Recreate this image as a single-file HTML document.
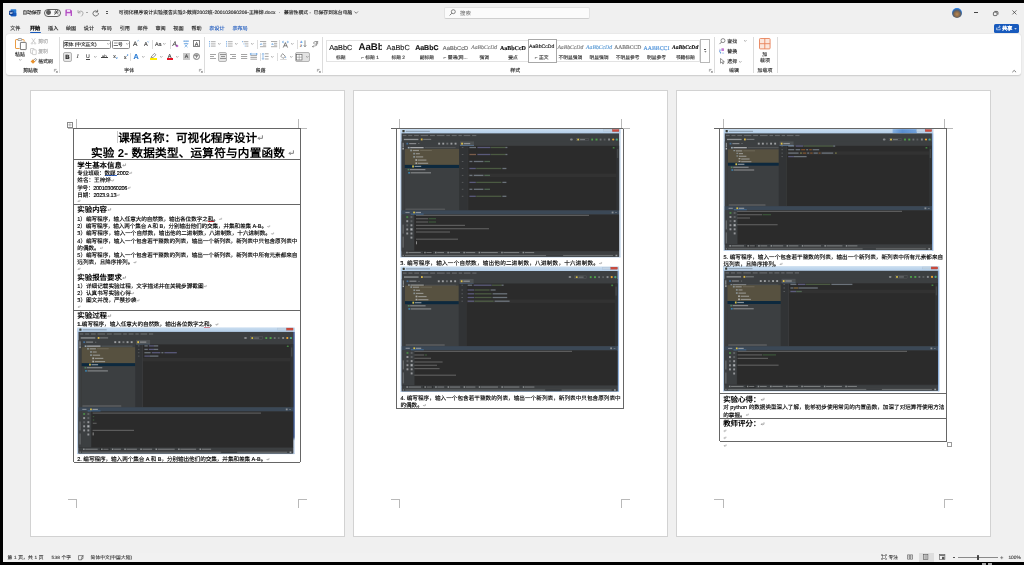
<!DOCTYPE html>
<html lang="zh-CN"><head><meta charset="utf-8"><title>Word</title><style>
html,body{margin:0;padding:0;background:#000;}
body{width:1024px;height:565px;overflow:hidden;position:relative;font-family:"Liberation Sans",sans-serif;}
#root{position:absolute;left:0;top:0;width:1024px;height:565px;overflow:hidden;background:#000;font-family:"Liberation Sans",sans-serif;text-rendering:geometricPrecision;}
#root div,#root svg{position:absolute;box-sizing:border-box;}
svg{overflow:visible;}
#tx{left:0;top:0;pointer-events:none;will-change:transform;}
#tx text{white-space:pre;}
.f-r{font-family:"Liberation Serif",serif;}
.f-m{font-family:"Liberation Mono",monospace;}
</style></head><body><div id="root">
<div style="left:3px;top:3px;width:1021px;height:559px;background:#f0f0f0;"></div>
<svg style="left:9.00px;top:9.00px;" width="7.5" height="7.5" viewBox="0 0 7.5 7.5"><rect x="1.6" y="0.3" width="5.7" height="6.9" rx="0.7" fill="#2b7cd3"/><rect x="1.6" y="3.8" width="5.7" height="3.4" rx="0.7" fill="#185abd"/><rect x="0" y="1.7" width="4.4" height="4.2" rx="0.6" fill="#103f91"/><path d="M1 2.8 L1.6 4.9 L2.2 3.3 L2.8 4.9 L3.4 2.8" stroke="#fff" stroke-width="0.55" fill="none"/></svg>
<div style="left:44.20px;top:8.60px;width:16.80px;height:8.00px;border:0.7px solid #5f5f5f;border-radius:4px;background:#f7f7f7;"></div>
<div style="left:46.00px;top:10.20px;width:4.80px;height:4.80px;border-radius:50%;background:#5a5a5a;"></div>
<svg style="left:65.00px;top:9.00px;" width="7.4" height="7.4" viewBox="0 0 7.4 7.4"><path d="M0.6 0.4 H5.6 L7 1.8 V6.4 Q7 7 6.4 7 H0.9 Q0.4 7 0.4 6.5 V0.9 Q0.4 0.4 0.9 0.4Z" fill="#b450c3"/><rect x="1.9" y="0.9" width="3.2" height="2" fill="#f3e4f6"/><rect x="1.7" y="4.3" width="4" height="2.7" fill="#f3e4f6"/></svg>
<svg style="left:77.00px;top:9.00px;" width="8" height="8" viewBox="0 0 8 8"><path d="M1 1.2 V3.8 H3.6" stroke="#9a9a9a" stroke-width="0.8" fill="none"/><path d="M1.2 3.6 Q3.2 1.2 5.2 2.4 Q7 3.8 5.4 6.2 L4.2 7.4" stroke="#9a9a9a" stroke-width="0.8" fill="none"/></svg>
<div style="left:86.00px;top:12.30px;width:1.60px;height:0.60px;background:#a5a5a5;"></div>
<svg style="left:92.00px;top:9.00px;" width="8" height="8" viewBox="0 0 8 8"><path d="M5.6 0.8 V3 H3.4" stroke="#555" stroke-width="0.8" fill="none"/><path d="M5.6 2.8 Q3.4 0.9 1.6 2.6 Q0.2 4.6 1.6 6.2 Q3.4 7.8 5.4 6.4 Q6.6 5.4 6.4 4" stroke="#555" stroke-width="0.8" fill="none"/></svg>
<div style="left:105.60px;top:11.40px;width:2.60px;height:0.60px;background:#555;"></div>
<div style="left:105.60px;top:13.00px;width:2.60px;height:0.60px;background:#555;"></div>
<svg style="left:354.00px;top:11.20px;" width="4.4" height="3" viewBox="0 0 4.4 3"><path d="M0.4 0.5 L2.2 2.3 L4 0.5" stroke="#444" stroke-width="0.7" fill="none"/></svg>
<div style="left:443.80px;top:6.70px;width:146.20px;height:12.20px;background:#fbfbfb;border:0.6px solid #e2e2e2;border-bottom-color:#cfcfcf;border-radius:2px;"></div>
<svg style="left:448.60px;top:9.20px;" width="7" height="7" viewBox="0 0 7 7"><circle cx="4.3" cy="2.7" r="2" stroke="#555" stroke-width="0.7" fill="none"/><path d="M2.9 4.2 L0.7 6.4" stroke="#555" stroke-width="0.8"/></svg>
<div style="left:952.00px;top:7.60px;width:10.00px;height:10.00px;border-radius:50%;background:radial-gradient(circle at 50% 62%, #b98a55 0, #8a6a4a 32%, #4a5e78 52%, #2a7de1 70%);"></div>
<div style="left:974.20px;top:12.30px;width:4.00px;height:0.55px;background:#444;"></div>
<svg style="left:992.60px;top:10.60px;" width="5.4" height="5" viewBox="0 0 5.4 5"><rect x="0.4" y="1.2" width="3.6" height="3.4" rx="0.7" stroke="#333" stroke-width="0.7" fill="none"/><path d="M1.4 0.4 H4 Q5 0.4 5 1.4 V3.6" stroke="#333" stroke-width="0.7" fill="none"/></svg>
<svg style="left:1012.00px;top:10.40px;" width="5" height="5" viewBox="0 0 5 5"><path d="M0.4 0.4 L4.4 4.4 M4.4 0.4 L0.4 4.4" stroke="#333" stroke-width="0.7"/></svg>
<div style="left:30.00px;top:32.30px;width:10.60px;height:0.90px;background:#185abd;border-radius:0.4px;"></div>
<div style="left:993.70px;top:23.50px;width:25.40px;height:9.30px;background:#185abd;border-radius:1.6px;"></div>
<svg style="left:996.00px;top:25.40px;" width="5.4" height="5.4" viewBox="0 0 5.4 5.4"><path d="M0.6 2.6 V4.8 H4.2 V3.4" stroke="#fff" stroke-width="0.6" fill="none"/><path d="M1.8 3.4 Q2.2 1.6 4 1.6 M3.2 0.6 L4.3 1.6 L3.2 2.6" stroke="#fff" stroke-width="0.6" fill="none"/></svg>
<svg style="left:1014.40px;top:27.60px;" width="3" height="2" viewBox="0 0 3 2"><path d="M0.2 0.3 L1.5 1.6 L2.8 0.3Z" fill="#fff"/></svg>
<div style="left:3.00px;top:552.80px;width:1021.00px;height:9.20px;background:#f1f1f1;"></div>
<svg style="left:78.00px;top:554.60px;" width="6.4" height="5.6" viewBox="0 0 6.4 5.6"><path d="M0.5 0.6 H5 V3.2 L3.6 4.8 H0.5Z" stroke="#444" stroke-width="0.6" fill="none"/><path d="M3.4 4.8 V3.2 H5" stroke="#444" stroke-width="0.5" fill="none"/><path d="M3 2.6 L5.6 0.6" stroke="#444" stroke-width="0.6"/></svg>
<svg style="left:881.00px;top:554.40px;" width="6" height="6" viewBox="0 0 6 6"><path d="M0.5 1.8 V0.6 H1.8 M4.2 0.6 H5.5 V1.8 M5.5 4.2 V5.4 H4.2 M1.8 5.4 H0.5 V4.2" stroke="#444" stroke-width="0.6" fill="none"/><rect x="1.7" y="1.6" width="2.6" height="2.8" stroke="#444" stroke-width="0.5" fill="none"/></svg>
<svg style="left:907.00px;top:554.40px;" width="6" height="6" viewBox="0 0 6 6"><path d="M0.5 0.8 H2.7 V5.2 H0.5Z M3.3 0.8 H5.5 V5.2 H3.3Z" stroke="#555" stroke-width="0.6" fill="none"/><path d="M1 2 H2.2 M1 3.2 H2.2 M3.8 2 H5 M3.8 3.2 H5" stroke="#777" stroke-width="0.4"/></svg>
<div style="left:918.60px;top:553.20px;width:15.00px;height:8.60px;background:#dedede;"></div>
<svg style="left:923.40px;top:554.40px;" width="5.4" height="6" viewBox="0 0 5.4 6"><rect x="0.5" y="0.5" width="4.4" height="5" stroke="#555" stroke-width="0.6" fill="none"/><path d="M1.4 1.8 H4 M1.4 3 H4 M1.4 4.2 H4" stroke="#666" stroke-width="0.5"/></svg>
<svg style="left:939.00px;top:554.40px;" width="6.4" height="6" viewBox="0 0 6.4 6"><rect x="0.5" y="0.5" width="5.4" height="5" stroke="#555" stroke-width="0.6" fill="none"/><rect x="0.5" y="0.5" width="5.4" height="1.5" fill="#777"/><rect x="3" y="2.8" width="2.4" height="2.4" fill="#555"/></svg>
<div style="left:953.00px;top:557.00px;width:2.20px;height:0.60px;background:#555;"></div>
<div style="left:957.80px;top:557.00px;width:39.80px;height:0.55px;background:#8a8a8a;"></div>
<div style="left:977.40px;top:554.90px;width:1.50px;height:4.80px;background:#444;border-radius:0.5px;"></div>
<svg style="left:999.60px;top:555.60px;" width="3.4" height="3.4" viewBox="0 0 3.4 3.4"><path d="M0.2 1.7 H3.2 M1.7 0.2 V3.2" stroke="#555" stroke-width="0.6"/></svg>
<div style="left:982.00px;top:563.30px;width:4.00px;height:1.70px;background:#cfcfcf;opacity:.8;"></div>
<div style="left:988.00px;top:563.30px;width:4.00px;height:1.70px;background:#cfcfcf;opacity:.8;"></div>
<div style="left:6.30px;top:34.30px;width:1014.40px;height:40.80px;background:#fff;border-radius:3px;box-shadow:0 0.6px 1.4px rgba(0,0,0,.16);"></div>
<svg style="left:14.60px;top:37.60px;" width="12" height="12.2" viewBox="0 0 12 12.2"><path d="M3.4 1.6 H1 Q0.5 1.6 0.5 2.1 V10 Q0.5 10.5 1 10.5 H4.6" stroke="#e8912d" stroke-width="0.9" fill="none"/><path d="M6.6 1.6 H8.6 Q9.1 1.6 9.1 2.1 V3.6" stroke="#e8912d" stroke-width="0.9" fill="none"/><path d="M3 2.4 V1.2 Q3 0.5 3.7 0.5 H6 Q6.7 0.5 6.7 1.2 V2.4Z" stroke="#777" stroke-width="0.7" fill="#fff"/><rect x="5.4" y="4.4" width="5.8" height="7.2" rx="0.5" stroke="#555" stroke-width="0.8" fill="#fff"/></svg>
<svg style="left:18.70px;top:59.40px;" width="2.6" height="1.8" viewBox="0 0 2.6 1.8"><path d="M0.2 0.3 L1.3 1.4 L2.4 0.3" stroke="#666" stroke-width="0.55" fill="none"/></svg>
<svg style="left:31.00px;top:37.80px;" width="5" height="6.6" viewBox="0 0 5 6.6"><path d="M0.8 0.3 L3.6 4.6 M4.2 0.3 L1.4 4.6" stroke="#b0b0b0" stroke-width="0.6"/><circle cx="1" cy="5.4" r="0.8" stroke="#b0b0b0" stroke-width="0.5" fill="none"/><circle cx="4" cy="5.4" r="0.8" stroke="#b0b0b0" stroke-width="0.5" fill="none"/></svg>
<svg style="left:30.20px;top:47.60px;" width="7" height="7" viewBox="0 0 7 7"><rect x="0.5" y="0.5" width="3.6" height="4.8" rx="0.4" stroke="#b0b0b0" stroke-width="0.6" fill="none"/><rect x="2.4" y="1.8" width="3.8" height="4.8" rx="0.4" stroke="#b0b0b0" stroke-width="0.6" fill="#fff"/></svg>
<svg style="left:30.20px;top:58.00px;" width="7.2" height="6.6" viewBox="0 0 7.2 6.6"><path d="M0.6 3.4 L3 5.8 L5.4 3.6 L3 1.2Z" fill="#e8912d"/><path d="M3.6 2 L5.8 0.5 L6.8 1.6 L5 3.2" stroke="#555" stroke-width="0.6" fill="#fff"/></svg>
<svg style="left:54.00px;top:68.90px;" width="3.8" height="3.8" viewBox="0 0 3.8 3.8"><path d="M0.4 2.6 V0.4 H2.6" stroke="#666" stroke-width="0.55" fill="none"/><path d="M1.6 1.6 L3.3 3.3 M3.4 1.9 V3.4 H1.9" stroke="#666" stroke-width="0.55" fill="none"/></svg>
<div style="left:59.10px;top:37.00px;width:0.60px;height:35.60px;background:#dcdcdc;"></div>
<div style="left:62.50px;top:39.50px;width:48.00px;height:9.00px;border:0.6px solid #8a8a8a;border-radius:1.6px;background:#fff;"></div>
<svg style="left:106.60px;top:43.40px;" width="2.6" height="1.8" viewBox="0 0 2.6 1.8"><path d="M0.2 0.3 L1.3 1.4 L2.4 0.3" stroke="#555" stroke-width="0.55" fill="none"/></svg>
<div style="left:112.00px;top:39.50px;width:18.30px;height:9.00px;border:0.6px solid #8a8a8a;border-radius:1.6px;background:#fff;"></div>
<svg style="left:126.20px;top:43.40px;" width="2.6" height="1.8" viewBox="0 0 2.6 1.8"><path d="M0.2 0.3 L1.3 1.4 L2.4 0.3" stroke="#555" stroke-width="0.55" fill="none"/></svg>
<svg style="left:136.80px;top:40.40px;" width="2.4" height="1.6" viewBox="0 0 2.4 1.6"><path d="M0.2 1.3 L1.2 0.3 L2.2 1.3" stroke="#2b7cd3" stroke-width="0.5" fill="none"/></svg>
<svg style="left:147.20px;top:40.60px;" width="2.4" height="1.6" viewBox="0 0 2.4 1.6"><path d="M0.2 0.3 L1.2 1.3 L2.2 0.3" stroke="#2b7cd3" stroke-width="0.5" fill="none"/></svg>
<div style="left:152.20px;top:40.00px;width:0.60px;height:8.60px;background:#dcdcdc;"></div>
<svg style="left:163.30px;top:43.40px;" width="2.6" height="1.8" viewBox="0 0 2.6 1.8"><path d="M0.2 0.3 L1.3 1.4 L2.4 0.3" stroke="#555" stroke-width="0.55" fill="none"/></svg>
<div style="left:169.70px;top:40.00px;width:0.60px;height:8.60px;background:#dcdcdc;"></div>
<svg style="left:175.40px;top:44.20px;" width="4" height="3.4" viewBox="0 0 4 3.4"><path d="M0.4 2 L2 0.4 L3.6 2 L2 3.2Z" fill="#b450c3"/></svg>
<svg style="left:183.20px;top:40.00px;" width="6.2" height="7.6" viewBox="0 0 6.2 7.6"><path d="M0.4 1.2 H5.8" stroke="#2b7cd3" stroke-width="0.5"/><path d="M1.2 0.3 V2 M3.1 0.3 V2 M5 0.3 V2" stroke="#2b7cd3" stroke-width="0.45"/><path d="M0.8 3.6 H5.4 M3.1 2.8 V3.6 M1.6 4.4 L4.6 7.2 M4.6 4.4 L1.6 7.2" stroke="#2b7cd3" stroke-width="0.55" fill="none"/></svg>
<div style="left:193.00px;top:40.10px;width:7.00px;height:7.20px;border:0.6px solid #808080;"></div>
<div style="left:204.40px;top:37.00px;width:0.60px;height:35.60px;background:#dcdcdc;"></div>
<div style="left:62.50px;top:52.00px;width:9.40px;height:9.60px;background:#e6e6e6;border:0.6px solid #b4b4b4;border-radius:2px;"></div>
<div style="left:86.10px;top:59.20px;width:3.80px;height:0.55px;background:#444;"></div>
<svg style="left:94.30px;top:56.10px;" width="2.6" height="1.8" viewBox="0 0 2.6 1.8"><path d="M0.2 0.3 L1.3 1.4 L2.4 0.3" stroke="#555" stroke-width="0.55" fill="none"/></svg>
<div style="left:101.20px;top:56.80px;width:6.40px;height:0.50px;background:#444;"></div>
<div style="left:130.20px;top:52.60px;width:0.60px;height:8.60px;background:#dcdcdc;"></div>
<svg style="left:142.10px;top:56.10px;" width="2.6" height="1.8" viewBox="0 0 2.6 1.8"><path d="M0.2 0.3 L1.3 1.4 L2.4 0.3" stroke="#555" stroke-width="0.55" fill="none"/></svg>
<svg style="left:150.40px;top:52.60px;" width="6.6" height="5.4" viewBox="0 0 6.6 5.4"><path d="M1 4.8 L1.8 3 L4.6 0.4 L6 1.8 L3.2 4.4Z" stroke="#555" stroke-width="0.6" fill="none"/></svg>
<div style="left:150.30px;top:58.10px;width:6.80px;height:1.70px;background:#ffeb00;"></div>
<svg style="left:159.60px;top:56.10px;" width="2.6" height="1.8" viewBox="0 0 2.6 1.8"><path d="M0.2 0.3 L1.3 1.4 L2.4 0.3" stroke="#555" stroke-width="0.55" fill="none"/></svg>
<div style="left:166.50px;top:58.10px;width:6.60px;height:1.70px;background:#e81123;"></div>
<svg style="left:175.70px;top:56.10px;" width="2.6" height="1.8" viewBox="0 0 2.6 1.8"><path d="M0.2 0.3 L1.3 1.4 L2.4 0.3" stroke="#555" stroke-width="0.55" fill="none"/></svg>
<div style="left:183.40px;top:53.30px;width:6.30px;height:6.50px;background:#c9c9c9;"></div>
<div style="left:193.00px;top:53.20px;width:7.00px;height:7.00px;border:0.6px solid #808080;border-radius:50%;"></div>
<svg style="left:199.00px;top:68.90px;" width="3.8" height="3.8" viewBox="0 0 3.8 3.8"><path d="M0.4 2.6 V0.4 H2.6" stroke="#666" stroke-width="0.55" fill="none"/><path d="M1.6 1.6 L3.3 3.3 M3.4 1.9 V3.4 H1.9" stroke="#666" stroke-width="0.55" fill="none"/></svg>
<svg style="left:209.00px;top:41.20px;" width="6.8" height="6" viewBox="0 0 6.8 6"><path d="M2 0.7 H6.6 M2 2.9 H6.6 M2 5.1 H6.6" stroke="#666" stroke-width="0.55"/><path d="M0.2 0.7 h0.9 M0.2 2.9 h0.9 M0.2 5.1 h0.9" stroke="#2b7cd3" stroke-width="0.9"/></svg>
<svg style="left:218.40px;top:43.40px;" width="2.6" height="1.8" viewBox="0 0 2.6 1.8"><path d="M0.2 0.3 L1.3 1.4 L2.4 0.3" stroke="#555" stroke-width="0.55" fill="none"/></svg>
<svg style="left:225.60px;top:41.20px;" width="6.8" height="6" viewBox="0 0 6.8 6"><path d="M2 0.7 H6.6 M2 2.9 H6.6 M2 5.1 H6.6" stroke="#666" stroke-width="0.55"/><path d="M0.6 0 V1.4 M0.6 2.2 V3.6 M0.6 4.4 V5.8" stroke="#2b7cd3" stroke-width="0.6"/></svg>
<svg style="left:235.00px;top:43.40px;" width="2.6" height="1.8" viewBox="0 0 2.6 1.8"><path d="M0.2 0.3 L1.3 1.4 L2.4 0.3" stroke="#555" stroke-width="0.55" fill="none"/></svg>
<svg style="left:241.80px;top:41.20px;" width="6.8" height="6" viewBox="0 0 6.8 6"><path d="M1.6 0.7 H6.4 M3 2.9 H6.4 M4.2 5.1 H6.4" stroke="#666" stroke-width="0.55"/><path d="M0.2 0.7 h0.8 M1.6 2.9 h0.8 M2.8 5.1 h0.8" stroke="#2b7cd3" stroke-width="0.8"/></svg>
<svg style="left:250.60px;top:43.40px;" width="2.6" height="1.8" viewBox="0 0 2.6 1.8"><path d="M0.2 0.3 L1.3 1.4 L2.4 0.3" stroke="#555" stroke-width="0.55" fill="none"/></svg>
<div style="left:257.20px;top:40.00px;width:0.60px;height:8.60px;background:#dcdcdc;"></div>
<svg style="left:260.00px;top:41.20px;" width="6.4" height="6" viewBox="0 0 6.4 6"><path d="M0 0.5 H6.2 M3 2.3 H6.2 M3 4.1 H6.2 M0 5.7 H6.2" stroke="#666" stroke-width="0.55"/><path d="M2.4 3.2 H0.4 M1.2 2.4 L0.4 3.2 L1.2 4" stroke="#2b7cd3" stroke-width="0.5" fill="none"/></svg>
<svg style="left:270.50px;top:41.20px;" width="6.4" height="6" viewBox="0 0 6.4 6"><path d="M0 0.5 H6.2 M3 2.3 H6.2 M3 4.1 H6.2 M0 5.7 H6.2" stroke="#666" stroke-width="0.55"/><path d="M0.2 3.2 H2.2 M1.4 2.4 L2.2 3.2 L1.4 4" stroke="#2b7cd3" stroke-width="0.5" fill="none"/></svg>
<div style="left:279.10px;top:40.00px;width:0.60px;height:8.60px;background:#dcdcdc;"></div>
<svg style="left:281.80px;top:40.60px;" width="7" height="7" viewBox="0 0 7 7"><path d="M1.2 6.6 L3.4 1.6 L5.6 6.6 M2 4.8 H4.8" stroke="#444" stroke-width="0.65" fill="none"/><path d="M0.4 1 L1.4 0.2 M0.4 1 L1.4 1.8 M6.4 1 L5.4 0.2 M6.4 1 L5.4 1.8 M0.4 1 H2 M6.4 1 H4.8" stroke="#2b7cd3" stroke-width="0.5" fill="none"/></svg>
<svg style="left:290.60px;top:43.40px;" width="2.6" height="1.8" viewBox="0 0 2.6 1.8"><path d="M0.2 0.3 L1.3 1.4 L2.4 0.3" stroke="#555" stroke-width="0.55" fill="none"/></svg>
<div style="left:297.00px;top:40.00px;width:0.60px;height:8.60px;background:#dcdcdc;"></div>
<svg style="left:299.60px;top:40.40px;" width="7" height="7.4" viewBox="0 0 7 7.4"><text x="0" y="3" font-size="3.2" fill="#2b7cd3" font-family="Liberation Sans" font-weight="700">A</text><text x="0.1" y="6.8" font-size="3.2" fill="#444" font-family="Liberation Sans" font-weight="700">Z</text><path d="M5 0.4 V6.6 M3.8 5.4 L5 6.7 L6.2 5.4" stroke="#444" stroke-width="0.6" fill="none"/></svg>
<svg style="left:311.80px;top:40.60px;" width="6.6" height="7" viewBox="0 0 6.6 7"><path d="M4.6 0.6 V4.4 M5.6 0.6 V3.2 M3 0.6 H6.2 M3.2 0.6 Q1.4 0.8 1.6 2.2 Q1.8 3.4 4.6 3.2" stroke="#555" stroke-width="0.55" fill="none"/><path d="M0.4 5.6 L4.6 4.4 M0.4 5.6 L1.6 4.8 M0.4 5.6 L1.6 6.2" stroke="#555" stroke-width="0.5" fill="none"/></svg>
<svg style="left:209.70px;top:54.00px;" width="6.2" height="6" viewBox="0 0 6.2 6"><path d="M0 0.5 H6 M0 2.5 H4 M0 4.5 H6" stroke="#666" stroke-width="0.6"/></svg>
<div style="left:218.10px;top:52.00px;width:9.40px;height:9.70px;background:#e6e6e6;border:0.6px solid #b4b4b4;border-radius:2px;"></div>
<svg style="left:219.80px;top:54.00px;" width="6.2" height="6" viewBox="0 0 6.2 6"><path d="M0 0.5 H6 M1 2.5 H5 M0 4.5 H6" stroke="#555" stroke-width="0.6"/></svg>
<svg style="left:230.20px;top:54.00px;" width="6.2" height="6" viewBox="0 0 6.2 6"><path d="M0 0.5 H6 M2 2.5 H6 M0 4.5 H6" stroke="#666" stroke-width="0.6"/></svg>
<svg style="left:240.60px;top:54.00px;" width="6.4" height="6" viewBox="0 0 6.4 6"><path d="M0 0.5 H6.2 M0 2.5 H6.2 M0 4.5 H6.2" stroke="#666" stroke-width="0.6"/></svg>
<svg style="left:250.20px;top:53.20px;" width="7.4" height="7.4" viewBox="0 0 7.4 7.4"><path d="M0.4 2.6 H7 M0.4 4.4 H7 M0.4 6.2 H7" stroke="#666" stroke-width="0.6"/><path d="M0.4 0.2 V1.8 M7 0.2 V1.8 M0.6 1 H6.8 M1.4 0.4 L0.6 1 L1.4 1.6 M6 0.4 L6.8 1 L6 1.6" stroke="#2b7cd3" stroke-width="0.5" fill="none"/></svg>
<div style="left:259.50px;top:52.60px;width:0.60px;height:8.60px;background:#dcdcdc;"></div>
<svg style="left:262.20px;top:53.40px;" width="6.8" height="7" viewBox="0 0 6.8 7"><path d="M2.8 0.8 H6.6 M2.8 3.4 H6.6 M2.8 6 H6.6" stroke="#666" stroke-width="0.6"/><path d="M1 0.4 V6.4 M0.2 1.4 L1 0.4 L1.8 1.4 M0.2 5.4 L1 6.4 L1.8 5.4" stroke="#2b7cd3" stroke-width="0.5" fill="none"/></svg>
<svg style="left:271.00px;top:56.10px;" width="2.6" height="1.8" viewBox="0 0 2.6 1.8"><path d="M0.2 0.3 L1.3 1.4 L2.4 0.3" stroke="#555" stroke-width="0.55" fill="none"/></svg>
<div style="left:277.20px;top:52.60px;width:0.60px;height:8.60px;background:#dcdcdc;"></div>
<svg style="left:280.40px;top:53.20px;" width="7" height="7" viewBox="0 0 7 7"><path d="M2.6 0.6 L5.4 3.4 L3 5.4 L0.8 3.2Z" stroke="#555" stroke-width="0.6" fill="none"/><path d="M5.8 3.6 Q6.6 4.8 5.8 5.2 Q5 4.8 5.8 3.6Z" fill="#2b7cd3"/><rect x="0.2" y="6" width="6.4" height="1" fill="#d8d8d8"/></svg>
<svg style="left:289.70px;top:56.10px;" width="2.6" height="1.8" viewBox="0 0 2.6 1.8"><path d="M0.2 0.3 L1.3 1.4 L2.4 0.3" stroke="#555" stroke-width="0.55" fill="none"/></svg>
<div style="left:295.20px;top:52.00px;width:15.10px;height:9.70px;background:#e2e2e2;border:0.6px solid #b4b4b4;border-radius:2px;"></div>
<svg style="left:296.40px;top:53.60px;" width="6.4" height="6.4" viewBox="0 0 6.4 6.4"><rect x="0.4" y="0.4" width="5.6" height="5.6" stroke="#555" stroke-width="0.6" fill="#fff"/><path d="M3.2 0.4 V6 M0.4 3.2 H6" stroke="#777" stroke-width="0.5"/></svg>
<svg style="left:306.00px;top:56.10px;" width="2.6" height="1.8" viewBox="0 0 2.6 1.8"><path d="M0.2 0.3 L1.3 1.4 L2.4 0.3" stroke="#555" stroke-width="0.55" fill="none"/></svg>
<svg style="left:317.30px;top:68.90px;" width="3.8" height="3.8" viewBox="0 0 3.8 3.8"><path d="M0.4 2.6 V0.4 H2.6" stroke="#666" stroke-width="0.55" fill="none"/><path d="M1.6 1.6 L3.3 3.3 M3.4 1.9 V3.4 H1.9" stroke="#666" stroke-width="0.55" fill="none"/></svg>
<div style="left:322.10px;top:37.00px;width:0.60px;height:35.60px;background:#dcdcdc;"></div>
<div style="left:326.40px;top:39.60px;width:374.00px;height:22.80px;border:0.6px solid #e3e3e3;background:#fff;"></div>
<div style="left:528.30px;top:39.30px;width:28.40px;height:23.40px;border:0.6px solid #a8a8a8;background:#fff;"></div>
<div style="left:700.30px;top:39.30px;width:9.60px;height:23.40px;border:0.6px solid #b8b8b8;background:#fff;"></div>
<div style="left:703.90px;top:49.40px;width:2.60px;height:0.50px;background:#555;"></div>
<svg style="left:703.80px;top:50.60px;" width="3" height="2" viewBox="0 0 3 2"><path d="M0.2 0.2 L1.4 1.5 L2.6 0.2Z" fill="#555"/></svg>
<svg style="left:709.30px;top:68.90px;" width="3.8" height="3.8" viewBox="0 0 3.8 3.8"><path d="M0.4 2.6 V0.4 H2.6" stroke="#666" stroke-width="0.55" fill="none"/><path d="M1.6 1.6 L3.3 3.3 M3.4 1.9 V3.4 H1.9" stroke="#666" stroke-width="0.55" fill="none"/></svg>
<div style="left:714.00px;top:37.00px;width:0.60px;height:35.60px;background:#dcdcdc;"></div>
<svg style="left:719.40px;top:37.60px;" width="6.6" height="6.6" viewBox="0 0 6.6 6.6"><circle cx="4" cy="2.6" r="2" stroke="#555" stroke-width="0.65" fill="none"/><path d="M2.6 4 L0.5 6.1" stroke="#555" stroke-width="0.75"/></svg>
<svg style="left:744.00px;top:40.20px;" width="2.6" height="1.8" viewBox="0 0 2.6 1.8"><path d="M0.2 0.3 L1.3 1.4 L2.4 0.3" stroke="#555" stroke-width="0.55" fill="none"/></svg>
<svg style="left:719.00px;top:48.00px;" width="6.4" height="6.4" viewBox="0 0 6.4 6.4"><rect x="2.4" y="0.3" width="2.6" height="2.6" rx="0.5" fill="#b450c3" opacity=".75"/><path d="M0.6 2.6 Q0.2 4.6 2 4.8 M1.3 4.1 L2.1 4.8 L1.3 5.5" stroke="#2b7cd3" stroke-width="0.6" fill="none"/><text x="3.2" y="6.2" font-size="3" fill="#2b7cd3" font-family="Liberation Sans">c</text><text x="0.2" y="2.6" font-size="3" fill="#2b7cd3" font-family="Liberation Sans">b</text></svg>
<svg style="left:719.80px;top:58.40px;" width="5" height="6.4" viewBox="0 0 5 6.4"><path d="M0.5 0.5 V5.2 L1.8 4.1 L2.8 6 L3.6 5.6 L2.7 3.8 H4.4Z" stroke="#444" stroke-width="0.55" fill="none"/></svg>
<svg style="left:738.60px;top:60.80px;" width="2.6" height="1.8" viewBox="0 0 2.6 1.8"><path d="M0.2 0.3 L1.3 1.4 L2.4 0.3" stroke="#555" stroke-width="0.55" fill="none"/></svg>
<div style="left:752.70px;top:37.00px;width:0.60px;height:35.60px;background:#dcdcdc;"></div>
<svg style="left:759.20px;top:37.60px;" width="11.6" height="11.4" viewBox="0 0 11.6 11.4"><rect x="0.5" y="0.5" width="10.6" height="10.4" rx="0.8" stroke="#e8825a" stroke-width="0.9" fill="#fbe6dc"/><path d="M5.8 0.5 V10.9 M0.5 5.7 H11.1" stroke="#e8825a" stroke-width="0.9"/></svg>
<div style="left:776.50px;top:37.00px;width:0.60px;height:35.60px;background:#dcdcdc;"></div>
<svg style="left:1011.70px;top:69.60px;" width="4.4" height="2.6" viewBox="0 0 4.4 2.6"><path d="M0.3 2.2 L2.2 0.4 L4.1 2.2" stroke="#444" stroke-width="0.7" fill="none"/></svg>
<div style="left:29.50px;top:90.40px;width:315.70px;height:446.80px;background:#fff;border:0.6px solid #d2d2d2;"></div>
<div style="left:352.60px;top:90.40px;width:315.70px;height:446.80px;background:#fff;border:0.6px solid #d2d2d2;"></div>
<div style="left:675.70px;top:90.40px;width:315.70px;height:446.80px;background:#fff;border:0.6px solid #d2d2d2;"></div>
<div style="left:76.30px;top:119.30px;width:0.60px;height:8.60px;background:#b9b9b9;"></div>
<div style="left:67.80px;top:127.60px;width:8.80px;height:0.60px;background:#b9b9b9;"></div>
<div style="left:298.10px;top:119.30px;width:0.60px;height:8.60px;background:#b9b9b9;"></div>
<div style="left:298.40px;top:127.60px;width:8.80px;height:0.60px;background:#b9b9b9;"></div>
<div style="left:76.30px;top:499.30px;width:0.60px;height:8.60px;background:#b9b9b9;"></div>
<div style="left:67.80px;top:499.00px;width:8.80px;height:0.60px;background:#b9b9b9;"></div>
<div style="left:298.10px;top:499.30px;width:0.60px;height:8.60px;background:#b9b9b9;"></div>
<div style="left:298.40px;top:499.00px;width:8.80px;height:0.60px;background:#b9b9b9;"></div>
<div style="left:399.40px;top:119.30px;width:0.60px;height:8.60px;background:#b9b9b9;"></div>
<div style="left:390.90px;top:127.60px;width:8.80px;height:0.60px;background:#b9b9b9;"></div>
<div style="left:621.20px;top:119.30px;width:0.60px;height:8.60px;background:#b9b9b9;"></div>
<div style="left:621.50px;top:127.60px;width:8.80px;height:0.60px;background:#b9b9b9;"></div>
<div style="left:399.40px;top:499.30px;width:0.60px;height:8.60px;background:#b9b9b9;"></div>
<div style="left:390.90px;top:499.00px;width:8.80px;height:0.60px;background:#b9b9b9;"></div>
<div style="left:621.20px;top:499.30px;width:0.60px;height:8.60px;background:#b9b9b9;"></div>
<div style="left:621.50px;top:499.00px;width:8.80px;height:0.60px;background:#b9b9b9;"></div>
<div style="left:722.50px;top:119.30px;width:0.60px;height:8.60px;background:#b9b9b9;"></div>
<div style="left:714.00px;top:127.60px;width:8.80px;height:0.60px;background:#b9b9b9;"></div>
<div style="left:944.30px;top:119.30px;width:0.60px;height:8.60px;background:#b9b9b9;"></div>
<div style="left:944.60px;top:127.60px;width:8.80px;height:0.60px;background:#b9b9b9;"></div>
<div style="left:722.50px;top:499.30px;width:0.60px;height:8.60px;background:#b9b9b9;"></div>
<div style="left:714.00px;top:499.00px;width:8.80px;height:0.60px;background:#b9b9b9;"></div>
<div style="left:944.30px;top:499.30px;width:0.60px;height:8.60px;background:#b9b9b9;"></div>
<div style="left:944.60px;top:499.00px;width:8.80px;height:0.60px;background:#b9b9b9;"></div>
<div style="left:73.80px;top:127.75px;width:226.70px;height:0.70px;background:#666;"></div>
<div style="left:73.80px;top:159.25px;width:226.70px;height:0.70px;background:#666;"></div>
<div style="left:73.80px;top:203.85px;width:226.70px;height:0.70px;background:#666;"></div>
<div style="left:73.80px;top:309.85px;width:226.70px;height:0.70px;background:#666;"></div>
<div style="left:73.80px;top:462.15px;width:226.70px;height:0.70px;background:#666;"></div>
<div style="left:73.45px;top:128.10px;width:0.70px;height:334.40px;background:#666;"></div>
<div style="left:300.15px;top:128.10px;width:0.70px;height:334.40px;background:#666;"></div>
<div style="left:67.40px;top:122.40px;width:5.80px;height:5.80px;border:0.5px solid #8a8a8a;background:#fff;"></div>
<svg style="left:68.40px;top:123.40px;" width="3.8" height="3.8" viewBox="0 0 3.8 3.8"><path d="M1.9 0.2 V3.6 M0.2 1.9 H3.6" stroke="#777" stroke-width="0.5"/></svg>
<div style="left:117.20px;top:131.40px;width:0.90px;height:11.20px;background:#c9c9c9;"></div>
<div style="left:105.30px;top:175.00px;width:12.20px;height:0.60px;background:#3b6fd6;"></div>
<div style="left:208.20px;top:221.00px;width:6.00px;height:0.60px;background:#e0323c;"></div>
<div style="left:204.40px;top:326.60px;width:6.00px;height:0.60px;background:#e0323c;"></div>
<svg style="left:77px;top:327px;overflow:hidden" width="218" height="128" viewBox="77 327 218 128"><defs><linearGradient id="g0" x1="0" y1="0" x2="0" y2="1"><stop offset="0%" stop-color="#cbdef0"/><stop offset="100%" stop-color="#b2cde8"/></linearGradient><linearGradient id="g1" x1="0" y1="0" x2="0" y2="1"><stop offset="0%" stop-color="#3f5794"/><stop offset="86%" stop-color="#36508c"/><stop offset="89%" stop-color="#cfdcee"/></linearGradient><linearGradient id="g2" x1="0" y1="0" x2="1" y2="0"><stop offset="0%" stop-color="#3592c4"/><stop offset="100%" stop-color="#62b543"/></linearGradient><clipPath id="c3"><rect x="77.20" y="327.40" width="217.60" height="126.80"/></clipPath></defs><g clip-path="url(#c3)"><rect x="77.20" y="327.40" width="217.60" height="126.80" fill="#b4cde8"/><rect x="77.20" y="327.40" width="217.60" height="4.60" fill="url(#g0)"/><rect x="77.20" y="332.00" width="1.40" height="122.20" fill="#bdd1e8"/><rect x="293.10" y="332.00" width="1.70" height="122.20" fill="url(#g1)"/><rect x="77.20" y="453.30" width="217.60" height="0.90" fill="#aec8e6"/><rect x="79.30" y="328.60" width="2.20" height="2.20" fill="#3a3d34" rx="0.4"/><rect x="82.70" y="329.30" width="24.00" height="1.00" fill="#55606c" opacity=".53"/><rect x="277.75" y="328.05" width="8.50" height="2.00" fill="#c4d4e4" opacity=".8" stroke="#9db2c9" stroke-width="0.3"/><rect x="286.45" y="327.95" width="6.60" height="2.20" fill="#cd4a3c" stroke="#9a4038" stroke-width="0.3"/><rect x="78.50" y="331.90" width="214.70" height="121.50" fill="#3c3f41"/><rect x="79.70" y="333.40" width="3.60" height="1.20" fill="#aeb1b3" opacity=".37"/><rect x="85.15" y="333.40" width="4.00" height="1.20" fill="#aeb1b3" opacity=".37"/><rect x="91.00" y="333.40" width="4.70" height="1.20" fill="#aeb1b3" opacity=".37"/><rect x="97.55" y="333.40" width="7.50" height="1.20" fill="#aeb1b3" opacity=".37"/><rect x="106.90" y="333.40" width="4.90" height="1.20" fill="#aeb1b3" opacity=".37"/><rect x="113.65" y="333.40" width="7.70" height="1.20" fill="#aeb1b3" opacity=".37"/><rect x="123.20" y="333.40" width="3.60" height="1.20" fill="#aeb1b3" opacity=".37"/><rect x="128.65" y="333.40" width="4.90" height="1.20" fill="#aeb1b3" opacity=".37"/><rect x="135.40" y="333.40" width="3.30" height="1.20" fill="#aeb1b3" opacity=".37"/><rect x="140.55" y="333.40" width="6.60" height="1.20" fill="#aeb1b3" opacity=".37"/><rect x="149.00" y="333.40" width="4.20" height="1.20" fill="#aeb1b3" opacity=".37"/><rect x="80.70" y="337.30" width="14.60" height="1.30" fill="#c8cacc" opacity=".61"/><rect x="97.70" y="337.00" width="1.80" height="1.90" fill="#d9b74a"/><rect x="100.10" y="337.30" width="8.00" height="1.20" fill="#aeb1b3" opacity=".49"/><rect x="244.20" y="337.00" width="2.60" height="2.00" fill="#a9acae" opacity=".66" rx="0.8"/><rect x="250.40" y="336.80" width="12.00" height="2.50" fill="none" stroke="#5e6062" stroke-width="0.4"/><rect x="251.40" y="337.20" width="1.80" height="1.70" fill="#d9c14a"/><rect x="254.20" y="337.50" width="5.00" height="1.10" fill="#aeb1b3" opacity=".49"/><rect x="265.40" y="337.10" width="1.80" height="1.90" fill="#4fa04a"/><rect x="269.60" y="337.10" width="2.00" height="1.90" fill="#4fa04a"/><rect x="273.80" y="337.10" width="1.80" height="1.90" fill="#6d7072"/><rect x="277.80" y="337.10" width="1.80" height="1.90" fill="#5d6062"/><rect x="282.20" y="337.00" width="1.90" height="2.00" fill="#aeb1b3" opacity=".66"/><rect x="286.20" y="336.90" width="2.20" height="2.20" fill="#f0a732" rx="1.10" ry="1.10"/><rect x="289.80" y="336.90" width="2.20" height="2.20" fill="url(#g2)" rx="0.88" ry="0.88"/><rect x="78.50" y="339.90" width="3.20" height="107.70" fill="#3c3f41"/><rect x="81.40" y="339.90" width="0.3" height="107.70" fill="#323232"/><rect x="79.20" y="340.90" width="1.60" height="7.60" fill="#4e5254"/><rect x="79.60" y="341.50" width="0.80" height="4.20" fill="#c5c7c9" opacity=".66"/><rect x="79.40" y="346.50" width="1.30" height="1.40" fill="#e8e8e8" opacity=".66"/><rect x="81.70" y="339.90" width="53.60" height="4.60" fill="#3c3f41"/><rect x="83.30" y="341.30" width="1.80" height="1.70" fill="#4a88c7" opacity=".66"/><rect x="86.10" y="341.50" width="7.00" height="1.20" fill="#bbbdbf" opacity=".57"/><rect x="95.10" y="341.80" width="1.20" height="0.70" fill="#bbbdbf" opacity=".57"/><rect x="114.30" y="341.20" width="1.90" height="1.90" fill="#b4b6b8" opacity="0.8"/><rect x="118.40" y="341.20" width="1.90" height="1.90" fill="#b4b6b8" opacity="0.8"/><rect x="122.50" y="341.20" width="1.90" height="1.90" fill="#b4b6b8" opacity="0.45"/><rect x="126.60" y="341.20" width="1.90" height="1.90" fill="#b4b6b8" opacity="0.8"/><rect x="130.70" y="341.20" width="1.90" height="1.90" fill="#b4b6b8" opacity="0.8"/><rect x="135.30" y="339.90" width="157.90" height="4.60" fill="#3c3f41"/><rect x="135.30" y="344.20" width="157.90" height="0.3" fill="#323232"/><rect x="136.10" y="339.90" width="14.00" height="4.60" fill="#4e5254"/><rect x="136.10" y="343.90" width="14.00" height="0.6" fill="#5a7ea6"/><rect x="137.30" y="341.20" width="1.70" height="1.90" fill="#e0c24a"/><rect x="139.90" y="341.50" width="6.40" height="1.20" fill="#c5c7c9" opacity=".57"/><rect x="81.70" y="344.50" width="53.60" height="62.80" fill="#3c3f41"/><rect x="81.70" y="344.60" width="53.60" height="2.70" fill="#3c3f41"/><rect x="84.70" y="345.40" width="1.80" height="1.60" fill="#9aa7b0"/><rect x="87.10" y="345.50" width="13.40" height="1.30" fill="#d3d5d7" opacity=".70"/><rect x="101.50" y="345.70" width="31.00" height="0.90" fill="#7d8082" opacity=".41"/><rect x="81.70" y="347.20" width="53.60" height="16.00" fill="#575140"/><rect x="87.10" y="347.90" width="1.80" height="1.70" fill="#9aa7b0" opacity=".74"/><rect x="89.70" y="348.20" width="6.20" height="1.20" fill="#c0c2c4" opacity=".57"/><rect x="97.10" y="348.30" width="11.60" height="0.90" fill="#8d8a7a" opacity=".45"/><rect x="90.10" y="351.10" width="1.80" height="1.70" fill="#9aa7b0" opacity=".74"/><rect x="92.70" y="351.40" width="4.00" height="1.20" fill="#c0c2c4" opacity=".57"/><rect x="90.10" y="354.30" width="1.80" height="1.70" fill="#9aa7b0" opacity=".74"/><rect x="92.70" y="354.60" width="7.40" height="1.20" fill="#c0c2c4" opacity=".57"/><rect x="92.30" y="357.50" width="1.80" height="1.70" fill="#c9ccce" opacity=".74"/><rect x="94.90" y="357.80" width="8.40" height="1.20" fill="#c0c2c4" opacity=".57"/><rect x="92.30" y="360.70" width="1.80" height="1.70" fill="#c9ccce" opacity=".74"/><rect x="94.90" y="361.00" width="10.20" height="1.20" fill="#c0c2c4" opacity=".57"/><rect x="81.70" y="363.20" width="53.60" height="2.90" fill="#0d293e"/><rect x="89.10" y="363.70" width="1.70" height="1.90" fill="#d9c14a"/><rect x="91.50" y="364.10" width="6.60" height="1.20" fill="#c9cbcd" opacity=".66"/><rect x="84.50" y="366.90" width="1.80" height="1.60" fill="#5f9e6e" opacity=".74"/><rect x="86.90" y="367.10" width="15.40" height="1.20" fill="#bbbdbf" opacity=".57"/><rect x="85.10" y="370.10" width="1.80" height="1.60" fill="#3e9ad0" opacity=".74"/><rect x="87.50" y="370.30" width="20.40" height="1.20" fill="#bbbdbf" opacity=".57"/><rect x="82.30" y="405.60" width="39.13" height="0.90" fill="#6a6d6f" rx="0.4"/><rect x="135.30" y="344.50" width="7.70" height="62.80" fill="#313335"/><rect x="142.70" y="344.50" width="0.3" height="62.80" fill="#4a4a4a"/><rect x="143.00" y="344.50" width="150.20" height="62.80" fill="#2b2b2b"/><rect x="143.00" y="357.90" width="147.60" height="3.40" fill="#323232"/><rect x="290.40" y="344.50" width="2.80" height="62.80" fill="#313335"/><rect x="291.00" y="347.50" width="1.40" height="9.00" fill="#55585a" opacity=".57"/><rect x="286.80" y="345.50" width="1.90" height="1.60" fill="#4c9e47" opacity=".74" rx="0.4"/><rect x="137.90" y="345.40" width="1.60" height="1.00" fill="#7c7f81" opacity=".49"/><rect x="144.40" y="345.25" width="3.40" height="1.30" fill="#a9b7c6" opacity=".51"/><rect x="148.80" y="345.25" width="5.20" height="1.30" fill="#8888c6" opacity=".51"/><rect x="154.00" y="345.25" width="4.20" height="1.30" fill="#a9b7c6" opacity=".51"/><rect x="137.90" y="348.90" width="1.60" height="1.00" fill="#7c7f81" opacity=".49"/><rect x="144.40" y="348.75" width="3.40" height="1.30" fill="#a9b7c6" opacity=".51"/><rect x="148.80" y="348.75" width="5.20" height="1.30" fill="#8888c6" opacity=".51"/><rect x="154.00" y="348.75" width="4.20" height="1.30" fill="#a9b7c6" opacity=".51"/><rect x="137.90" y="352.20" width="1.60" height="1.00" fill="#7c7f81" opacity=".49"/><rect x="144.40" y="352.05" width="6.20" height="1.30" fill="#a9b7c6" opacity=".51"/><rect x="151.80" y="352.05" width="8.60" height="1.30" fill="#8888c6" opacity=".51"/><rect x="161.40" y="352.05" width="2.00" height="1.30" fill="#a9b7c6" opacity=".51"/><rect x="164.40" y="352.05" width="12.40" height="1.30" fill="#8888c6" opacity=".51"/><rect x="137.90" y="355.60" width="1.60" height="1.00" fill="#7c7f81" opacity=".49"/><rect x="144.40" y="355.45" width="5.60" height="1.30" fill="#8888c6" opacity=".51"/><rect x="150.00" y="355.45" width="8.40" height="1.30" fill="#a9b7c6" opacity=".51"/><rect x="78.50" y="407.30" width="214.70" height="4.00" fill="#3b4856"/><rect x="82.30" y="408.80" width="4.20" height="1.20" fill="#bbbdbf" opacity=".57"/><rect x="87.70" y="410.70" width="12.80" height="0.80" fill="#4a88c7"/><rect x="90.10" y="408.50" width="1.70" height="1.70" fill="#d9c14a"/><rect x="92.50" y="408.80" width="5.40" height="1.20" fill="#c5c7c9" opacity=".61"/><rect x="285.80" y="408.50" width="1.80" height="1.80" fill="#b4b6b8" opacity=".66"/><rect x="289.20" y="409.20" width="1.80" height="0.60" fill="#b4b6b8" opacity=".66"/><rect x="78.50" y="411.50" width="3.20" height="36.10" fill="#3c3f41"/><rect x="79.40" y="421.50" width="1.30" height="9.00" fill="#8f9294" opacity=".49"/><rect x="79.40" y="433.50" width="1.30" height="11.00" fill="#8f9294" opacity=".49"/><rect x="81.70" y="411.50" width="9.60" height="36.10" fill="#3c3f41"/><rect x="91.00" y="411.50" width="0.3" height="36.10" fill="#323232"/><rect x="83.20" y="413.00" width="1.90" height="2.00" fill="#4fa04a" opacity=".70"/><rect x="87.40" y="413.00" width="1.90" height="2.00" fill="#6e7173" opacity=".70"/><rect x="83.20" y="417.10" width="1.90" height="2.00" fill="#b9bbbd" opacity=".70"/><rect x="87.40" y="417.10" width="1.90" height="2.00" fill="#6e7173" opacity=".70"/><rect x="83.20" y="421.20" width="1.90" height="2.00" fill="#6e7173" opacity=".70"/><rect x="87.40" y="421.20" width="1.90" height="2.00" fill="#b9bbbd" opacity=".70"/><rect x="83.20" y="425.30" width="1.90" height="2.00" fill="#b9bbbd" opacity=".70"/><rect x="86.90" y="424.80" width="3.00" height="3.00" fill="#55595c"/><rect x="87.40" y="425.30" width="1.90" height="2.00" fill="#d5d7d9" opacity=".70"/><rect x="83.20" y="429.40" width="1.90" height="2.00" fill="#b9bbbd" opacity=".70"/><rect x="87.40" y="429.40" width="1.90" height="2.00" fill="#b9bbbd" opacity=".70"/><rect x="87.40" y="433.50" width="1.90" height="2.00" fill="#b9bbbd" opacity=".70"/><rect x="91.30" y="411.50" width="201.90" height="36.10" fill="#2b2b2b"/><rect x="92.60" y="412.50" width="168.40" height="1.20" fill="#bbbbbb" opacity=".34"/><rect x="92.80" y="416.00" width="1.40" height="1.20" fill="#5fae57" opacity=".34"/><rect x="92.80" y="419.40" width="1.40" height="1.20" fill="#5fae57" opacity=".34"/><rect x="92.80" y="422.70" width="3.80" height="1.20" fill="#bbbbbb" opacity=".34"/><rect x="92.60" y="429.80" width="41.40" height="1.20" fill="#bbbbbb" opacity=".34"/><rect x="92.80" y="432.40" width="0.60" height="3.00" fill="#cfcfcf"/><rect x="78.50" y="447.60" width="214.70" height="3.30" fill="#3c3f41"/><rect x="78.50" y="447.60" width="214.70" height="0.3" fill="#2e2e2e"/><rect x="83.10" y="448.50" width="1.50" height="1.50" fill="#c0c2c4" opacity=".66"/><rect x="85.30" y="448.70" width="12.40" height="1.10" fill="#b4b6b8" opacity=".51"/><rect x="99.90" y="447.80" width="9.80" height="3.00" fill="#2d2f30"/><rect x="101.10" y="448.50" width="1.50" height="1.50" fill="#c0c2c4" opacity=".66"/><rect x="103.30" y="448.70" width="5.20" height="1.10" fill="#b4b6b8" opacity=".51"/><rect x="111.90" y="448.50" width="1.50" height="1.50" fill="#c0c2c4" opacity=".66"/><rect x="114.10" y="448.70" width="6.80" height="1.10" fill="#b4b6b8" opacity=".51"/><rect x="124.30" y="448.50" width="1.50" height="1.50" fill="#c0c2c4" opacity=".66"/><rect x="126.50" y="448.70" width="10.40" height="1.10" fill="#b4b6b8" opacity=".51"/><rect x="140.30" y="448.50" width="1.50" height="1.50" fill="#c0c2c4" opacity=".66"/><rect x="142.50" y="448.70" width="9.60" height="1.10" fill="#b4b6b8" opacity=".51"/><rect x="155.50" y="448.50" width="1.50" height="1.50" fill="#c0c2c4" opacity=".66"/><rect x="157.70" y="448.70" width="17.00" height="1.10" fill="#b4b6b8" opacity=".51"/><rect x="178.10" y="448.50" width="1.50" height="1.50" fill="#c0c2c4" opacity=".66"/><rect x="180.30" y="448.70" width="15.80" height="1.10" fill="#b4b6b8" opacity=".51"/><rect x="199.50" y="448.50" width="1.50" height="1.50" fill="#c0c2c4" opacity=".66"/><rect x="201.70" y="448.70" width="9.40" height="1.10" fill="#b4b6b8" opacity=".51"/><rect x="78.50" y="450.90" width="214.70" height="2.50" fill="#3c3f41"/><rect x="78.50" y="450.90" width="214.70" height="0.3" fill="#4b4b4b"/><rect x="79.50" y="451.60" width="1.30" height="1.30" fill="#a9acae" opacity=".57"/><rect x="81.90" y="451.75" width="139.26" height="1.00" fill="#a9acae" opacity=".45"/><rect x="237.20" y="451.75" width="50.00" height="1.00" fill="#a9acae" opacity=".45"/><rect x="289.60" y="451.50" width="1.80" height="1.50" fill="#c9cbcd" opacity=".66"/></g></svg>
<div style="left:390.80px;top:128.15px;width:232.60px;height:0.70px;background:#666;"></div>
<div style="left:396.80px;top:408.25px;width:226.60px;height:0.70px;background:#666;"></div>
<div style="left:396.45px;top:128.50px;width:0.70px;height:280.10px;background:#666;"></div>
<div style="left:623.05px;top:128.50px;width:0.70px;height:280.10px;background:#666;"></div>
<svg style="left:400px;top:128px;overflow:hidden" width="221" height="130" viewBox="400 128 221 130"><defs><linearGradient id="g4" x1="0" y1="0" x2="0" y2="1"><stop offset="0%" stop-color="#cbdef0"/><stop offset="100%" stop-color="#b2cde8"/></linearGradient><linearGradient id="g5" x1="0" y1="0" x2="1" y2="0"><stop offset="0%" stop-color="#3592c4"/><stop offset="100%" stop-color="#62b543"/></linearGradient><clipPath id="c6"><rect x="400.30" y="128.90" width="220.40" height="128.60"/></clipPath></defs><g clip-path="url(#c6)"><rect x="400.30" y="128.90" width="220.40" height="128.60" fill="#b4cde8"/><rect x="400.30" y="128.90" width="220.40" height="4.60" fill="url(#g4)"/><rect x="400.30" y="133.50" width="1.40" height="124.00" fill="#bdd1e8"/><rect x="619.00" y="133.50" width="1.70" height="124.00" fill="#d3e0ef"/><rect x="400.30" y="256.60" width="220.40" height="0.90" fill="#aec8e6"/><rect x="402.40" y="130.10" width="2.20" height="2.20" fill="#3a3d34" rx="0.4"/><rect x="405.80" y="130.80" width="24.00" height="1.00" fill="#55606c" opacity=".53"/><rect x="603.65" y="129.55" width="8.50" height="2.00" fill="#c4d4e4" opacity=".8" stroke="#9db2c9" stroke-width="0.3"/><rect x="612.35" y="129.45" width="6.60" height="2.20" fill="#cd4a3c" stroke="#9a4038" stroke-width="0.3"/><rect x="401.60" y="133.40" width="217.50" height="123.30" fill="#3c3f41"/><rect x="402.80" y="134.90" width="3.60" height="1.20" fill="#aeb1b3" opacity=".37"/><rect x="408.25" y="134.90" width="4.00" height="1.20" fill="#aeb1b3" opacity=".37"/><rect x="414.10" y="134.90" width="4.70" height="1.20" fill="#aeb1b3" opacity=".37"/><rect x="420.65" y="134.90" width="7.50" height="1.20" fill="#aeb1b3" opacity=".37"/><rect x="430.00" y="134.90" width="4.90" height="1.20" fill="#aeb1b3" opacity=".37"/><rect x="436.75" y="134.90" width="7.70" height="1.20" fill="#aeb1b3" opacity=".37"/><rect x="446.30" y="134.90" width="3.60" height="1.20" fill="#aeb1b3" opacity=".37"/><rect x="451.75" y="134.90" width="4.90" height="1.20" fill="#aeb1b3" opacity=".37"/><rect x="458.50" y="134.90" width="3.30" height="1.20" fill="#aeb1b3" opacity=".37"/><rect x="463.65" y="134.90" width="6.60" height="1.20" fill="#aeb1b3" opacity=".37"/><rect x="472.10" y="134.90" width="4.20" height="1.20" fill="#aeb1b3" opacity=".37"/><rect x="403.80" y="138.80" width="14.60" height="1.30" fill="#c8cacc" opacity=".61"/><rect x="420.80" y="138.50" width="1.80" height="1.90" fill="#d9b74a"/><rect x="423.20" y="138.80" width="8.00" height="1.20" fill="#aeb1b3" opacity=".49"/><rect x="570.10" y="138.50" width="2.60" height="2.00" fill="#a9acae" opacity=".66" rx="0.8"/><rect x="576.30" y="138.30" width="12.00" height="2.50" fill="none" stroke="#5e6062" stroke-width="0.4"/><rect x="577.30" y="138.70" width="1.80" height="1.70" fill="#d9c14a"/><rect x="580.10" y="139.00" width="5.00" height="1.10" fill="#aeb1b3" opacity=".49"/><rect x="591.30" y="138.60" width="1.80" height="1.90" fill="#4fa04a"/><rect x="595.50" y="138.60" width="2.00" height="1.90" fill="#4fa04a"/><rect x="599.70" y="138.60" width="1.80" height="1.90" fill="#6d7072"/><rect x="603.70" y="138.60" width="1.80" height="1.90" fill="#5d6062"/><rect x="608.10" y="138.50" width="1.90" height="2.00" fill="#aeb1b3" opacity=".66"/><rect x="612.10" y="138.40" width="2.20" height="2.20" fill="#f0a732" rx="1.10" ry="1.10"/><rect x="615.70" y="138.40" width="2.20" height="2.20" fill="url(#g5)" rx="0.88" ry="0.88"/><rect x="401.60" y="141.40" width="3.20" height="109.50" fill="#3c3f41"/><rect x="404.50" y="141.40" width="0.3" height="109.50" fill="#323232"/><rect x="402.30" y="142.40" width="1.60" height="7.60" fill="#4e5254"/><rect x="402.70" y="143.00" width="0.80" height="4.20" fill="#c5c7c9" opacity=".66"/><rect x="402.50" y="148.00" width="1.30" height="1.40" fill="#e8e8e8" opacity=".66"/><rect x="404.80" y="141.40" width="54.40" height="4.60" fill="#3c3f41"/><rect x="406.40" y="142.80" width="1.80" height="1.70" fill="#4a88c7" opacity=".66"/><rect x="409.20" y="143.00" width="7.00" height="1.20" fill="#bbbdbf" opacity=".57"/><rect x="418.20" y="143.30" width="1.20" height="0.70" fill="#bbbdbf" opacity=".57"/><rect x="438.20" y="142.70" width="1.90" height="1.90" fill="#b4b6b8" opacity="0.8"/><rect x="442.30" y="142.70" width="1.90" height="1.90" fill="#b4b6b8" opacity="0.8"/><rect x="446.40" y="142.70" width="1.90" height="1.90" fill="#b4b6b8" opacity="0.45"/><rect x="450.50" y="142.70" width="1.90" height="1.90" fill="#b4b6b8" opacity="0.8"/><rect x="454.60" y="142.70" width="1.90" height="1.90" fill="#b4b6b8" opacity="0.8"/><rect x="459.20" y="141.40" width="159.90" height="4.60" fill="#3c3f41"/><rect x="459.20" y="145.70" width="159.90" height="0.3" fill="#323232"/><rect x="460.00" y="141.40" width="14.00" height="4.60" fill="#4e5254"/><rect x="460.00" y="145.40" width="14.00" height="0.6" fill="#5a7ea6"/><rect x="461.20" y="142.70" width="1.70" height="1.90" fill="#e0c24a"/><rect x="463.80" y="143.00" width="6.40" height="1.20" fill="#c5c7c9" opacity=".57"/><rect x="404.80" y="146.00" width="54.40" height="64.40" fill="#3c3f41"/><rect x="404.80" y="146.10" width="54.40" height="2.90" fill="#3c3f41"/><rect x="407.80" y="146.90" width="1.80" height="1.60" fill="#9aa7b0"/><rect x="410.20" y="147.00" width="13.40" height="1.30" fill="#d3d5d7" opacity=".70"/><rect x="424.60" y="147.20" width="31.00" height="0.90" fill="#7d8082" opacity=".41"/><rect x="404.80" y="148.90" width="54.40" height="16.00" fill="#575140"/><rect x="410.20" y="149.60" width="1.80" height="1.70" fill="#9aa7b0" opacity=".74"/><rect x="412.80" y="149.90" width="6.20" height="1.20" fill="#c0c2c4" opacity=".57"/><rect x="420.20" y="150.00" width="11.60" height="0.90" fill="#8d8a7a" opacity=".45"/><rect x="413.20" y="152.80" width="1.80" height="1.70" fill="#9aa7b0" opacity=".74"/><rect x="415.80" y="153.10" width="4.00" height="1.20" fill="#c0c2c4" opacity=".57"/><rect x="413.20" y="156.00" width="1.80" height="1.70" fill="#9aa7b0" opacity=".74"/><rect x="415.80" y="156.30" width="7.40" height="1.20" fill="#c0c2c4" opacity=".57"/><rect x="415.40" y="159.20" width="1.80" height="1.70" fill="#c9ccce" opacity=".74"/><rect x="418.00" y="159.50" width="8.40" height="1.20" fill="#c0c2c4" opacity=".57"/><rect x="415.40" y="162.40" width="1.80" height="1.70" fill="#c9ccce" opacity=".74"/><rect x="418.00" y="162.70" width="10.20" height="1.20" fill="#c0c2c4" opacity=".57"/><rect x="404.80" y="164.90" width="54.40" height="3.10" fill="#0d293e"/><rect x="412.20" y="165.40" width="1.70" height="2.10" fill="#d9c14a"/><rect x="414.60" y="165.80" width="6.60" height="1.20" fill="#c9cbcd" opacity=".66"/><rect x="407.60" y="168.80" width="1.80" height="1.60" fill="#5f9e6e" opacity=".74"/><rect x="410.00" y="169.00" width="15.40" height="1.20" fill="#bbbdbf" opacity=".57"/><rect x="408.20" y="172.00" width="1.80" height="1.60" fill="#3e9ad0" opacity=".74"/><rect x="410.60" y="172.20" width="20.40" height="1.20" fill="#bbbdbf" opacity=".57"/><rect x="405.40" y="208.70" width="39.71" height="0.90" fill="#6a6d6f" rx="0.4"/><rect x="459.20" y="146.00" width="9.00" height="64.40" fill="#313335"/><rect x="467.90" y="146.00" width="0.3" height="64.40" fill="#4a4a4a"/><rect x="468.20" y="146.00" width="150.90" height="64.40" fill="#2b2b2b"/><rect x="468.20" y="173.70" width="148.30" height="3.40" fill="#323232"/><rect x="616.30" y="146.00" width="2.80" height="64.40" fill="#313335"/><rect x="616.90" y="149.00" width="1.40" height="9.00" fill="#55585a" opacity=".57"/><rect x="612.70" y="147.00" width="1.90" height="1.60" fill="#4c9e47" opacity=".74" rx="0.4"/><rect x="461.80" y="147.00" width="1.60" height="1.00" fill="#7c7f81" opacity=".49"/><rect x="469.40" y="146.85" width="6.60" height="1.30" fill="#a9b7c6" opacity=".51"/><rect x="477.40" y="146.85" width="13.00" height="1.30" fill="#8888c6" opacity=".51"/><rect x="490.80" y="146.85" width="14.60" height="1.30" fill="#6a8759" opacity=".51"/><rect x="505.40" y="146.85" width="2.00" height="1.30" fill="#a9b7c6" opacity=".51"/><rect x="461.80" y="154.00" width="1.60" height="1.00" fill="#7c7f81" opacity=".49"/><rect x="469.40" y="153.85" width="6.60" height="1.30" fill="#c98d6a" opacity=".51"/><rect x="477.40" y="153.85" width="13.00" height="1.30" fill="#8888c6" opacity=".51"/><rect x="490.80" y="153.85" width="14.60" height="1.30" fill="#6a8759" opacity=".51"/><rect x="505.40" y="153.85" width="2.00" height="1.30" fill="#a9b7c6" opacity=".51"/><rect x="461.80" y="161.00" width="1.60" height="1.00" fill="#7c7f81" opacity=".49"/><rect x="469.40" y="160.85" width="3.00" height="1.30" fill="#a9b7c6" opacity=".51"/><rect x="473.80" y="160.85" width="9.60" height="1.30" fill="#a9b7c6" opacity=".51"/><rect x="484.40" y="160.85" width="5.60" height="1.30" fill="#6f9a73" opacity=".51"/><rect x="461.80" y="168.00" width="1.60" height="1.00" fill="#7c7f81" opacity=".49"/><rect x="469.40" y="167.85" width="6.40" height="1.30" fill="#8888c6" opacity=".51"/><rect x="476.20" y="167.85" width="25.20" height="1.30" fill="#6a8759" opacity=".51"/><rect x="502.40" y="167.85" width="4.00" height="1.30" fill="#a9b7c6" opacity=".51"/><rect x="461.80" y="174.90" width="1.60" height="1.00" fill="#7c7f81" opacity=".49"/><rect x="469.40" y="174.75" width="3.00" height="1.30" fill="#a9b7c6" opacity=".51"/><rect x="473.80" y="174.75" width="9.60" height="1.30" fill="#a9b7c6" opacity=".51"/><rect x="484.40" y="174.75" width="5.60" height="1.30" fill="#6f9a73" opacity=".51"/><rect x="461.80" y="181.90" width="1.60" height="1.00" fill="#7c7f81" opacity=".49"/><rect x="469.40" y="181.75" width="6.40" height="1.30" fill="#8888c6" opacity=".51"/><rect x="476.20" y="181.75" width="25.20" height="1.30" fill="#6a8759" opacity=".51"/><rect x="502.40" y="181.75" width="4.00" height="1.30" fill="#a9b7c6" opacity=".51"/><rect x="461.80" y="188.80" width="1.60" height="1.00" fill="#7c7f81" opacity=".49"/><rect x="469.40" y="188.65" width="3.00" height="1.30" fill="#a9b7c6" opacity=".51"/><rect x="473.80" y="188.65" width="9.60" height="1.30" fill="#a9b7c6" opacity=".51"/><rect x="484.40" y="188.65" width="5.60" height="1.30" fill="#6f9a73" opacity=".51"/><rect x="461.80" y="195.80" width="1.60" height="1.00" fill="#7c7f81" opacity=".49"/><rect x="469.40" y="195.65" width="6.40" height="1.30" fill="#8888c6" opacity=".51"/><rect x="476.20" y="195.65" width="25.20" height="1.30" fill="#6a8759" opacity=".51"/><rect x="502.40" y="195.65" width="4.00" height="1.30" fill="#a9b7c6" opacity=".51"/><rect x="401.60" y="210.40" width="217.50" height="4.00" fill="#3b4856"/><rect x="405.40" y="211.90" width="4.20" height="1.20" fill="#bbbdbf" opacity=".57"/><rect x="410.80" y="213.80" width="12.80" height="0.80" fill="#4a88c7"/><rect x="413.20" y="211.60" width="1.70" height="1.70" fill="#d9c14a"/><rect x="415.60" y="211.90" width="5.40" height="1.20" fill="#c5c7c9" opacity=".61"/><rect x="611.70" y="211.60" width="1.80" height="1.80" fill="#b4b6b8" opacity=".66"/><rect x="615.10" y="212.30" width="1.80" height="0.60" fill="#b4b6b8" opacity=".66"/><rect x="401.60" y="214.60" width="3.20" height="36.30" fill="#3c3f41"/><rect x="402.50" y="224.60" width="1.30" height="9.00" fill="#8f9294" opacity=".49"/><rect x="402.50" y="236.60" width="1.30" height="11.00" fill="#8f9294" opacity=".49"/><rect x="404.80" y="214.60" width="9.60" height="36.30" fill="#3c3f41"/><rect x="414.10" y="214.60" width="0.3" height="36.30" fill="#323232"/><rect x="406.30" y="216.10" width="1.90" height="2.00" fill="#4fa04a" opacity=".70"/><rect x="410.50" y="216.10" width="1.90" height="2.00" fill="#6e7173" opacity=".70"/><rect x="406.30" y="220.20" width="1.90" height="2.00" fill="#b9bbbd" opacity=".70"/><rect x="410.50" y="220.20" width="1.90" height="2.00" fill="#6e7173" opacity=".70"/><rect x="406.30" y="224.30" width="1.90" height="2.00" fill="#6e7173" opacity=".70"/><rect x="410.50" y="224.30" width="1.90" height="2.00" fill="#b9bbbd" opacity=".70"/><rect x="406.30" y="228.40" width="1.90" height="2.00" fill="#b9bbbd" opacity=".70"/><rect x="410.00" y="227.90" width="3.00" height="3.00" fill="#55595c"/><rect x="410.50" y="228.40" width="1.90" height="2.00" fill="#d5d7d9" opacity=".70"/><rect x="406.30" y="232.50" width="1.90" height="2.00" fill="#b9bbbd" opacity=".70"/><rect x="410.50" y="232.50" width="1.90" height="2.00" fill="#b9bbbd" opacity=".70"/><rect x="410.50" y="236.60" width="1.90" height="2.00" fill="#b9bbbd" opacity=".70"/><rect x="414.40" y="214.60" width="204.70" height="36.30" fill="#2b2b2b"/><rect x="416.00" y="214.80" width="173.00" height="1.20" fill="#bbbbbb" opacity=".34"/><rect x="416.00" y="218.10" width="12.00" height="1.20" fill="#bbbbbb" opacity=".34"/><rect x="428.60" y="218.10" width="7.40" height="1.20" fill="#5fae57" opacity=".34"/><rect x="416.00" y="221.40" width="12.00" height="1.20" fill="#bbbbbb" opacity=".34"/><rect x="428.60" y="221.40" width="7.40" height="1.20" fill="#5fae57" opacity=".34"/><rect x="416.00" y="224.80" width="49.00" height="1.20" fill="#bbbbbb" opacity=".34"/><rect x="416.00" y="228.10" width="73.00" height="1.20" fill="#bbbbbb" opacity=".34"/><rect x="416.00" y="231.40" width="34.00" height="1.20" fill="#bbbbbb" opacity=".34"/><rect x="416.00" y="238.60" width="42.00" height="1.20" fill="#bbbbbb" opacity=".34"/><rect x="416.20" y="241.30" width="0.60" height="3.00" fill="#cfcfcf"/><rect x="401.60" y="250.90" width="217.50" height="3.30" fill="#3c3f41"/><rect x="401.60" y="250.90" width="217.50" height="0.3" fill="#2e2e2e"/><rect x="406.20" y="251.80" width="1.50" height="1.50" fill="#c0c2c4" opacity=".66"/><rect x="408.40" y="252.00" width="12.40" height="1.10" fill="#b4b6b8" opacity=".51"/><rect x="423.00" y="251.10" width="9.80" height="3.00" fill="#2d2f30"/><rect x="424.20" y="251.80" width="1.50" height="1.50" fill="#c0c2c4" opacity=".66"/><rect x="426.40" y="252.00" width="5.20" height="1.10" fill="#b4b6b8" opacity=".51"/><rect x="435.00" y="251.80" width="1.50" height="1.50" fill="#c0c2c4" opacity=".66"/><rect x="437.20" y="252.00" width="6.80" height="1.10" fill="#b4b6b8" opacity=".51"/><rect x="447.40" y="251.80" width="1.50" height="1.50" fill="#c0c2c4" opacity=".66"/><rect x="449.60" y="252.00" width="10.40" height="1.10" fill="#b4b6b8" opacity=".51"/><rect x="463.40" y="251.80" width="1.50" height="1.50" fill="#c0c2c4" opacity=".66"/><rect x="465.60" y="252.00" width="9.60" height="1.10" fill="#b4b6b8" opacity=".51"/><rect x="478.60" y="251.80" width="1.50" height="1.50" fill="#c0c2c4" opacity=".66"/><rect x="480.80" y="252.00" width="17.00" height="1.10" fill="#b4b6b8" opacity=".51"/><rect x="501.20" y="251.80" width="1.50" height="1.50" fill="#c0c2c4" opacity=".66"/><rect x="503.40" y="252.00" width="15.80" height="1.10" fill="#b4b6b8" opacity=".51"/><rect x="522.60" y="251.80" width="1.50" height="1.50" fill="#c0c2c4" opacity=".66"/><rect x="524.80" y="252.00" width="9.40" height="1.10" fill="#b4b6b8" opacity=".51"/><rect x="401.60" y="254.20" width="217.50" height="2.50" fill="#3c3f41"/><rect x="401.60" y="254.20" width="217.50" height="0.3" fill="#4b4b4b"/><rect x="402.60" y="254.90" width="1.30" height="1.30" fill="#a9acae" opacity=".57"/><rect x="405.00" y="255.05" width="141.06" height="1.00" fill="#a9acae" opacity=".45"/><rect x="563.10" y="255.05" width="50.00" height="1.00" fill="#a9acae" opacity=".45"/><rect x="615.50" y="254.80" width="1.80" height="1.50" fill="#c9cbcd" opacity=".66"/></g></svg>
<svg style="left:400px;top:266px;overflow:hidden" width="220" height="126" viewBox="400 266 220 126"><defs><linearGradient id="g7" x1="0" y1="0" x2="0" y2="1"><stop offset="0%" stop-color="#cbdef0"/><stop offset="100%" stop-color="#b2cde8"/></linearGradient><linearGradient id="g8" x1="0" y1="0" x2="1" y2="0"><stop offset="0%" stop-color="#3592c4"/><stop offset="100%" stop-color="#62b543"/></linearGradient><clipPath id="c9"><rect x="400.50" y="266.50" width="218.70" height="125.50"/></clipPath></defs><g clip-path="url(#c9)"><rect x="400.50" y="266.50" width="218.70" height="125.50" fill="#b4cde8"/><rect x="400.50" y="266.50" width="218.70" height="4.60" fill="url(#g7)"/><rect x="400.50" y="271.10" width="1.40" height="120.90" fill="#bdd1e8"/><rect x="617.50" y="271.10" width="1.70" height="120.90" fill="#8fb0da"/><rect x="400.50" y="391.10" width="218.70" height="0.90" fill="#aec8e6"/><rect x="402.60" y="267.70" width="2.20" height="2.20" fill="#3a3d34" rx="0.4"/><rect x="406.00" y="268.40" width="24.00" height="1.00" fill="#55606c" opacity=".53"/><rect x="602.15" y="267.15" width="8.50" height="2.00" fill="#c4d4e4" opacity=".8" stroke="#9db2c9" stroke-width="0.3"/><rect x="610.85" y="267.05" width="6.60" height="2.20" fill="#cd4a3c" stroke="#9a4038" stroke-width="0.3"/><rect x="401.80" y="271.00" width="215.80" height="120.20" fill="#3c3f41"/><rect x="403.00" y="272.50" width="3.60" height="1.20" fill="#aeb1b3" opacity=".37"/><rect x="408.45" y="272.50" width="4.00" height="1.20" fill="#aeb1b3" opacity=".37"/><rect x="414.30" y="272.50" width="4.70" height="1.20" fill="#aeb1b3" opacity=".37"/><rect x="420.85" y="272.50" width="7.50" height="1.20" fill="#aeb1b3" opacity=".37"/><rect x="430.20" y="272.50" width="4.90" height="1.20" fill="#aeb1b3" opacity=".37"/><rect x="436.95" y="272.50" width="7.70" height="1.20" fill="#aeb1b3" opacity=".37"/><rect x="446.50" y="272.50" width="3.60" height="1.20" fill="#aeb1b3" opacity=".37"/><rect x="451.95" y="272.50" width="4.90" height="1.20" fill="#aeb1b3" opacity=".37"/><rect x="458.70" y="272.50" width="3.30" height="1.20" fill="#aeb1b3" opacity=".37"/><rect x="463.85" y="272.50" width="6.60" height="1.20" fill="#aeb1b3" opacity=".37"/><rect x="472.30" y="272.50" width="4.20" height="1.20" fill="#aeb1b3" opacity=".37"/><rect x="404.00" y="276.40" width="14.60" height="1.30" fill="#c8cacc" opacity=".61"/><rect x="421.00" y="276.10" width="1.80" height="1.90" fill="#d9b74a"/><rect x="423.40" y="276.40" width="8.00" height="1.20" fill="#aeb1b3" opacity=".49"/><rect x="568.60" y="276.10" width="2.60" height="2.00" fill="#a9acae" opacity=".66" rx="0.8"/><rect x="574.80" y="275.90" width="12.00" height="2.50" fill="none" stroke="#5e6062" stroke-width="0.4"/><rect x="575.80" y="276.30" width="1.80" height="1.70" fill="#d9c14a"/><rect x="578.60" y="276.60" width="5.00" height="1.10" fill="#aeb1b3" opacity=".49"/><rect x="589.80" y="276.20" width="1.80" height="1.90" fill="#4fa04a"/><rect x="594.00" y="276.20" width="2.00" height="1.90" fill="#4fa04a"/><rect x="598.20" y="276.20" width="1.80" height="1.90" fill="#6d7072"/><rect x="602.20" y="276.20" width="1.80" height="1.90" fill="#5d6062"/><rect x="606.60" y="276.10" width="1.90" height="2.00" fill="#aeb1b3" opacity=".66"/><rect x="610.60" y="276.00" width="2.20" height="2.20" fill="#f0a732" rx="1.10" ry="1.10"/><rect x="614.20" y="276.00" width="2.20" height="2.20" fill="url(#g8)" rx="0.88" ry="0.88"/><rect x="401.80" y="279.00" width="3.20" height="106.40" fill="#3c3f41"/><rect x="404.70" y="279.00" width="0.3" height="106.40" fill="#323232"/><rect x="402.50" y="280.00" width="1.60" height="7.60" fill="#4e5254"/><rect x="402.90" y="280.60" width="0.80" height="4.20" fill="#c5c7c9" opacity=".66"/><rect x="402.70" y="285.60" width="1.30" height="1.40" fill="#e8e8e8" opacity=".66"/><rect x="405.00" y="279.00" width="53.80" height="4.60" fill="#3c3f41"/><rect x="406.60" y="280.40" width="1.80" height="1.70" fill="#4a88c7" opacity=".66"/><rect x="409.40" y="280.60" width="7.00" height="1.20" fill="#bbbdbf" opacity=".57"/><rect x="418.40" y="280.90" width="1.20" height="0.70" fill="#bbbdbf" opacity=".57"/><rect x="437.80" y="280.30" width="1.90" height="1.90" fill="#b4b6b8" opacity="0.8"/><rect x="441.90" y="280.30" width="1.90" height="1.90" fill="#b4b6b8" opacity="0.8"/><rect x="446.00" y="280.30" width="1.90" height="1.90" fill="#b4b6b8" opacity="0.45"/><rect x="450.10" y="280.30" width="1.90" height="1.90" fill="#b4b6b8" opacity="0.8"/><rect x="454.20" y="280.30" width="1.90" height="1.90" fill="#b4b6b8" opacity="0.8"/><rect x="458.80" y="279.00" width="158.80" height="4.60" fill="#3c3f41"/><rect x="458.80" y="283.30" width="158.80" height="0.3" fill="#323232"/><rect x="459.60" y="279.00" width="14.00" height="4.60" fill="#4e5254"/><rect x="459.60" y="283.00" width="14.00" height="0.6" fill="#5a7ea6"/><rect x="460.80" y="280.30" width="1.70" height="1.90" fill="#e0c24a"/><rect x="463.40" y="280.60" width="6.40" height="1.20" fill="#c5c7c9" opacity=".57"/><rect x="405.00" y="283.60" width="53.80" height="62.60" fill="#3c3f41"/><rect x="405.00" y="283.70" width="53.80" height="2.00" fill="#3c3f41"/><rect x="408.00" y="284.50" width="1.80" height="1.60" fill="#9aa7b0"/><rect x="410.40" y="284.60" width="13.40" height="1.30" fill="#d3d5d7" opacity=".70"/><rect x="424.80" y="284.80" width="31.00" height="0.90" fill="#7d8082" opacity=".41"/><rect x="405.00" y="285.60" width="53.80" height="15.60" fill="#575140"/><rect x="410.40" y="286.30" width="1.80" height="1.62" fill="#9aa7b0" opacity=".74"/><rect x="413.00" y="286.60" width="6.20" height="1.20" fill="#c0c2c4" opacity=".57"/><rect x="420.40" y="286.70" width="11.60" height="0.90" fill="#8d8a7a" opacity=".45"/><rect x="413.40" y="289.42" width="1.80" height="1.62" fill="#9aa7b0" opacity=".74"/><rect x="416.00" y="289.72" width="4.00" height="1.20" fill="#c0c2c4" opacity=".57"/><rect x="413.40" y="292.54" width="1.80" height="1.62" fill="#9aa7b0" opacity=".74"/><rect x="416.00" y="292.84" width="7.40" height="1.20" fill="#c0c2c4" opacity=".57"/><rect x="415.60" y="295.66" width="1.80" height="1.62" fill="#c9ccce" opacity=".74"/><rect x="418.20" y="295.96" width="8.40" height="1.20" fill="#c0c2c4" opacity=".57"/><rect x="415.60" y="298.78" width="1.80" height="1.62" fill="#c9ccce" opacity=".74"/><rect x="418.20" y="299.08" width="10.20" height="1.20" fill="#c0c2c4" opacity=".57"/><rect x="405.00" y="301.20" width="53.80" height="3.00" fill="#0d293e"/><rect x="412.40" y="301.70" width="1.70" height="2.00" fill="#d9c14a"/><rect x="414.80" y="302.10" width="6.60" height="1.20" fill="#c9cbcd" opacity=".66"/><rect x="407.80" y="305.00" width="1.80" height="1.60" fill="#5f9e6e" opacity=".74"/><rect x="410.20" y="305.20" width="15.40" height="1.20" fill="#bbbdbf" opacity=".57"/><rect x="408.40" y="308.12" width="1.80" height="1.60" fill="#3e9ad0" opacity=".74"/><rect x="410.80" y="308.32" width="20.40" height="1.20" fill="#bbbdbf" opacity=".57"/><rect x="405.60" y="344.50" width="39.27" height="0.90" fill="#6a6d6f" rx="0.4"/><rect x="458.80" y="283.60" width="7.60" height="62.60" fill="#313335"/><rect x="466.10" y="283.60" width="0.3" height="62.60" fill="#4a4a4a"/><rect x="466.40" y="283.60" width="151.20" height="62.60" fill="#2b2b2b"/><rect x="466.40" y="299.50" width="148.60" height="3.40" fill="#323232"/><rect x="614.80" y="283.60" width="2.80" height="62.60" fill="#313335"/><rect x="615.40" y="286.60" width="1.40" height="9.00" fill="#55585a" opacity=".57"/><rect x="611.20" y="284.60" width="1.90" height="1.60" fill="#4c9e47" opacity=".74" rx="0.4"/><rect x="461.40" y="284.70" width="1.60" height="1.00" fill="#7c7f81" opacity=".49"/><rect x="467.60" y="284.55" width="4.60" height="1.30" fill="#a9b7c6" opacity=".51"/><rect x="473.60" y="284.55" width="18.00" height="1.30" fill="#8888c6" opacity=".51"/><rect x="492.00" y="284.55" width="9.60" height="1.30" fill="#6a8759" opacity=".51"/><rect x="501.60" y="284.55" width="2.00" height="1.30" fill="#a9b7c6" opacity=".51"/><rect x="461.40" y="289.50" width="1.60" height="1.00" fill="#7c7f81" opacity=".49"/><rect x="467.60" y="289.35" width="6.40" height="1.30" fill="#8888c6" opacity=".51"/><rect x="474.40" y="289.35" width="15.20" height="1.30" fill="#6a8759" opacity=".51"/><rect x="490.60" y="289.35" width="5.00" height="1.30" fill="#a9b7c6" opacity=".51"/><rect x="461.40" y="293.30" width="1.60" height="1.00" fill="#7c7f81" opacity=".49"/><rect x="467.60" y="293.15" width="6.40" height="1.30" fill="#8888c6" opacity=".51"/><rect x="474.40" y="293.15" width="17.20" height="1.30" fill="#6a8759" opacity=".51"/><rect x="492.60" y="293.15" width="14.60" height="1.30" fill="#a9b7c6" opacity=".51"/><rect x="461.40" y="297.00" width="1.60" height="1.00" fill="#7c7f81" opacity=".49"/><rect x="467.60" y="296.85" width="6.40" height="1.30" fill="#8888c6" opacity=".51"/><rect x="474.40" y="296.85" width="17.20" height="1.30" fill="#6a8759" opacity=".51"/><rect x="492.60" y="296.85" width="14.60" height="1.30" fill="#a9b7c6" opacity=".51"/><rect x="461.40" y="300.70" width="1.60" height="1.00" fill="#7c7f81" opacity=".49"/><rect x="467.60" y="300.55" width="6.40" height="1.30" fill="#8888c6" opacity=".51"/><rect x="474.40" y="300.55" width="19.20" height="1.30" fill="#6a8759" opacity=".51"/><rect x="494.60" y="300.55" width="15.00" height="1.30" fill="#a9b7c6" opacity=".51"/><rect x="401.80" y="346.20" width="215.80" height="4.00" fill="#3b4856"/><rect x="405.60" y="347.70" width="4.20" height="1.20" fill="#bbbdbf" opacity=".57"/><rect x="411.00" y="349.60" width="12.80" height="0.80" fill="#4a88c7"/><rect x="413.40" y="347.40" width="1.70" height="1.70" fill="#d9c14a"/><rect x="415.80" y="347.70" width="5.40" height="1.20" fill="#c5c7c9" opacity=".61"/><rect x="610.20" y="347.40" width="1.80" height="1.80" fill="#b4b6b8" opacity=".66"/><rect x="613.60" y="348.10" width="1.80" height="0.60" fill="#b4b6b8" opacity=".66"/><rect x="401.80" y="350.40" width="3.20" height="35.00" fill="#3c3f41"/><rect x="402.70" y="360.40" width="1.30" height="9.00" fill="#8f9294" opacity=".49"/><rect x="402.70" y="372.40" width="1.30" height="11.00" fill="#8f9294" opacity=".49"/><rect x="405.00" y="350.40" width="9.60" height="35.00" fill="#3c3f41"/><rect x="414.30" y="350.40" width="0.3" height="35.00" fill="#323232"/><rect x="406.50" y="351.90" width="1.90" height="2.00" fill="#4fa04a" opacity=".70"/><rect x="410.70" y="351.90" width="1.90" height="2.00" fill="#6e7173" opacity=".70"/><rect x="406.50" y="356.00" width="1.90" height="2.00" fill="#b9bbbd" opacity=".70"/><rect x="410.70" y="356.00" width="1.90" height="2.00" fill="#6e7173" opacity=".70"/><rect x="406.50" y="360.10" width="1.90" height="2.00" fill="#6e7173" opacity=".70"/><rect x="410.70" y="360.10" width="1.90" height="2.00" fill="#b9bbbd" opacity=".70"/><rect x="406.50" y="364.20" width="1.90" height="2.00" fill="#b9bbbd" opacity=".70"/><rect x="410.20" y="363.70" width="3.00" height="3.00" fill="#55595c"/><rect x="410.70" y="364.20" width="1.90" height="2.00" fill="#d5d7d9" opacity=".70"/><rect x="406.50" y="368.30" width="1.90" height="2.00" fill="#b9bbbd" opacity=".70"/><rect x="410.70" y="368.30" width="1.90" height="2.00" fill="#b9bbbd" opacity=".70"/><rect x="410.70" y="372.40" width="1.90" height="2.00" fill="#b9bbbd" opacity=".70"/><rect x="414.60" y="350.40" width="203.00" height="35.00" fill="#2b2b2b"/><rect x="414.40" y="350.80" width="157.60" height="1.20" fill="#bbbbbb" opacity=".34"/><rect x="414.40" y="354.40" width="9.60" height="1.20" fill="#bbbbbb" opacity=".34"/><rect x="424.60" y="354.40" width="2.40" height="1.20" fill="#5fae57" opacity=".34"/><rect x="414.40" y="357.70" width="16.60" height="1.20" fill="#bbbbbb" opacity=".34"/><rect x="414.40" y="361.40" width="28.20" height="1.20" fill="#bbbbbb" opacity=".34"/><rect x="414.40" y="364.70" width="22.60" height="1.20" fill="#bbbbbb" opacity=".34"/><rect x="414.40" y="368.00" width="25.20" height="1.20" fill="#bbbbbb" opacity=".34"/><rect x="414.40" y="374.60" width="41.60" height="1.20" fill="#bbbbbb" opacity=".34"/><rect x="401.80" y="385.40" width="215.80" height="3.30" fill="#3c3f41"/><rect x="401.80" y="385.40" width="215.80" height="0.3" fill="#2e2e2e"/><rect x="406.40" y="386.30" width="1.50" height="1.50" fill="#c0c2c4" opacity=".66"/><rect x="408.60" y="386.50" width="12.40" height="1.10" fill="#b4b6b8" opacity=".51"/><rect x="423.20" y="385.60" width="9.80" height="3.00" fill="#2d2f30"/><rect x="424.40" y="386.30" width="1.50" height="1.50" fill="#c0c2c4" opacity=".66"/><rect x="426.60" y="386.50" width="5.20" height="1.10" fill="#b4b6b8" opacity=".51"/><rect x="435.20" y="386.30" width="1.50" height="1.50" fill="#c0c2c4" opacity=".66"/><rect x="437.40" y="386.50" width="6.80" height="1.10" fill="#b4b6b8" opacity=".51"/><rect x="447.60" y="386.30" width="1.50" height="1.50" fill="#c0c2c4" opacity=".66"/><rect x="449.80" y="386.50" width="10.40" height="1.10" fill="#b4b6b8" opacity=".51"/><rect x="463.60" y="386.30" width="1.50" height="1.50" fill="#c0c2c4" opacity=".66"/><rect x="465.80" y="386.50" width="9.60" height="1.10" fill="#b4b6b8" opacity=".51"/><rect x="478.80" y="386.30" width="1.50" height="1.50" fill="#c0c2c4" opacity=".66"/><rect x="481.00" y="386.50" width="17.00" height="1.10" fill="#b4b6b8" opacity=".51"/><rect x="501.40" y="386.30" width="1.50" height="1.50" fill="#c0c2c4" opacity=".66"/><rect x="503.60" y="386.50" width="15.80" height="1.10" fill="#b4b6b8" opacity=".51"/><rect x="522.80" y="386.30" width="1.50" height="1.50" fill="#c0c2c4" opacity=".66"/><rect x="525.00" y="386.50" width="9.40" height="1.10" fill="#b4b6b8" opacity=".51"/><rect x="401.80" y="388.70" width="215.80" height="2.50" fill="#3c3f41"/><rect x="401.80" y="388.70" width="215.80" height="0.3" fill="#4b4b4b"/><rect x="402.80" y="389.40" width="1.30" height="1.30" fill="#a9acae" opacity=".57"/><rect x="405.20" y="389.55" width="139.97" height="1.00" fill="#a9acae" opacity=".45"/><rect x="561.60" y="389.55" width="50.00" height="1.00" fill="#a9acae" opacity=".45"/><rect x="614.00" y="389.30" width="1.80" height="1.50" fill="#c9cbcd" opacity=".66"/></g></svg>
<div style="left:713.80px;top:128.35px;width:233.00px;height:0.70px;background:#666;"></div>
<div style="left:719.60px;top:392.85px;width:227.20px;height:0.70px;background:#666;"></div>
<div style="left:719.60px;top:417.65px;width:227.20px;height:0.70px;background:#666;"></div>
<div style="left:719.60px;top:440.95px;width:227.20px;height:0.70px;background:#666;"></div>
<div style="left:719.25px;top:128.70px;width:0.70px;height:312.60px;background:#666;"></div>
<div style="left:946.45px;top:128.70px;width:0.70px;height:312.60px;background:#666;"></div>
<svg style="left:723px;top:128px;overflow:hidden" width="211" height="123" viewBox="723 128 211 123"><defs><linearGradient id="g10" x1="0" y1="0" x2="0" y2="1"><stop offset="0%" stop-color="#cbdef0"/><stop offset="100%" stop-color="#b2cde8"/></linearGradient><linearGradient id="g11" x1="0" y1="0" x2="1" y2="0"><stop offset="0%" stop-color="#6ea2dc"/><stop offset="40%" stop-color="#2f6fc4"/><stop offset="100%" stop-color="#4f8ad2"/></linearGradient><linearGradient id="g12" x1="0" y1="0" x2="1" y2="0"><stop offset="0%" stop-color="#3592c4"/><stop offset="100%" stop-color="#62b543"/></linearGradient><clipPath id="c13"><rect x="723.50" y="128.90" width="210.00" height="121.90"/></clipPath></defs><g clip-path="url(#c13)"><rect x="723.50" y="128.90" width="210.00" height="121.90" fill="#b4cde8"/><rect x="723.50" y="128.90" width="210.00" height="4.60" fill="url(#g10)"/><rect x="723.50" y="133.50" width="1.40" height="117.30" fill="#bdd1e8"/><rect x="931.80" y="133.50" width="1.70" height="117.30" fill="#8fb0da"/><rect x="723.50" y="249.90" width="210.00" height="0.90" fill="#aec8e6"/><rect x="892.60" y="129.20" width="24.20" height="3.90" fill="url(#g11)" opacity=".70"/><rect x="725.60" y="130.10" width="2.20" height="2.20" fill="#3a3d34" rx="0.4"/><rect x="729.00" y="130.80" width="24.00" height="1.00" fill="#55606c" opacity=".53"/><rect x="916.45" y="129.55" width="8.50" height="2.00" fill="#c4d4e4" opacity=".8" stroke="#9db2c9" stroke-width="0.3"/><rect x="925.15" y="129.45" width="6.60" height="2.20" fill="#cd4a3c" stroke="#9a4038" stroke-width="0.3"/><rect x="724.80" y="133.40" width="207.10" height="116.60" fill="#3c3f41"/><rect x="726.00" y="134.90" width="3.60" height="1.20" fill="#aeb1b3" opacity=".37"/><rect x="731.45" y="134.90" width="4.00" height="1.20" fill="#aeb1b3" opacity=".37"/><rect x="737.30" y="134.90" width="4.70" height="1.20" fill="#aeb1b3" opacity=".37"/><rect x="743.85" y="134.90" width="7.50" height="1.20" fill="#aeb1b3" opacity=".37"/><rect x="753.20" y="134.90" width="4.90" height="1.20" fill="#aeb1b3" opacity=".37"/><rect x="759.95" y="134.90" width="7.70" height="1.20" fill="#aeb1b3" opacity=".37"/><rect x="769.50" y="134.90" width="3.60" height="1.20" fill="#aeb1b3" opacity=".37"/><rect x="774.95" y="134.90" width="4.90" height="1.20" fill="#aeb1b3" opacity=".37"/><rect x="781.70" y="134.90" width="3.30" height="1.20" fill="#aeb1b3" opacity=".37"/><rect x="786.85" y="134.90" width="6.60" height="1.20" fill="#aeb1b3" opacity=".37"/><rect x="795.30" y="134.90" width="4.20" height="1.20" fill="#aeb1b3" opacity=".37"/><rect x="727.00" y="138.80" width="14.60" height="1.30" fill="#c8cacc" opacity=".61"/><rect x="744.00" y="138.50" width="1.80" height="1.90" fill="#d9b74a"/><rect x="746.40" y="138.80" width="8.00" height="1.20" fill="#aeb1b3" opacity=".49"/><rect x="882.90" y="138.50" width="2.60" height="2.00" fill="#a9acae" opacity=".66" rx="0.8"/><rect x="889.10" y="138.30" width="12.00" height="2.50" fill="none" stroke="#5e6062" stroke-width="0.4"/><rect x="890.10" y="138.70" width="1.80" height="1.70" fill="#d9c14a"/><rect x="892.90" y="139.00" width="5.00" height="1.10" fill="#aeb1b3" opacity=".49"/><rect x="904.10" y="138.60" width="1.80" height="1.90" fill="#4fa04a"/><rect x="908.30" y="138.60" width="2.00" height="1.90" fill="#4fa04a"/><rect x="912.50" y="138.60" width="1.80" height="1.90" fill="#6d7072"/><rect x="916.50" y="138.60" width="1.80" height="1.90" fill="#5d6062"/><rect x="920.90" y="138.50" width="1.90" height="2.00" fill="#aeb1b3" opacity=".66"/><rect x="924.90" y="138.40" width="2.20" height="2.20" fill="#f0a732" rx="1.10" ry="1.10"/><rect x="928.50" y="138.40" width="2.20" height="2.20" fill="url(#g12)" rx="0.88" ry="0.88"/><rect x="724.80" y="141.40" width="3.20" height="102.80" fill="#3c3f41"/><rect x="727.70" y="141.40" width="0.3" height="102.80" fill="#323232"/><rect x="725.50" y="142.40" width="1.60" height="7.60" fill="#4e5254"/><rect x="725.90" y="143.00" width="0.80" height="4.20" fill="#c5c7c9" opacity=".66"/><rect x="725.70" y="148.00" width="1.30" height="1.40" fill="#e8e8e8" opacity=".66"/><rect x="728.00" y="141.40" width="50.80" height="4.60" fill="#3c3f41"/><rect x="729.60" y="142.80" width="1.80" height="1.70" fill="#4a88c7" opacity=".66"/><rect x="732.40" y="143.00" width="7.00" height="1.20" fill="#bbbdbf" opacity=".57"/><rect x="741.40" y="143.30" width="1.20" height="0.70" fill="#bbbdbf" opacity=".57"/><rect x="757.80" y="142.70" width="1.90" height="1.90" fill="#b4b6b8" opacity="0.8"/><rect x="761.90" y="142.70" width="1.90" height="1.90" fill="#b4b6b8" opacity="0.8"/><rect x="766.00" y="142.70" width="1.90" height="1.90" fill="#b4b6b8" opacity="0.45"/><rect x="770.10" y="142.70" width="1.90" height="1.90" fill="#b4b6b8" opacity="0.8"/><rect x="774.20" y="142.70" width="1.90" height="1.90" fill="#b4b6b8" opacity="0.8"/><rect x="778.80" y="141.40" width="153.10" height="4.60" fill="#3c3f41"/><rect x="778.80" y="145.70" width="153.10" height="0.3" fill="#323232"/><rect x="779.60" y="141.40" width="14.00" height="4.60" fill="#4e5254"/><rect x="779.60" y="145.40" width="14.00" height="0.6" fill="#5a7ea6"/><rect x="780.80" y="142.70" width="1.70" height="1.90" fill="#e0c24a"/><rect x="783.40" y="143.00" width="6.40" height="1.20" fill="#c5c7c9" opacity=".57"/><rect x="728.00" y="146.00" width="50.80" height="60.20" fill="#3c3f41"/><rect x="728.00" y="146.10" width="50.80" height="3.30" fill="#3c3f41"/><rect x="731.00" y="146.90" width="1.80" height="1.60" fill="#9aa7b0"/><rect x="733.40" y="147.00" width="13.40" height="1.30" fill="#d3d5d7" opacity=".70"/><rect x="747.80" y="147.20" width="31.00" height="0.90" fill="#7d8082" opacity=".41"/><rect x="728.00" y="149.30" width="50.80" height="13.50" fill="#575140"/><rect x="733.40" y="150.00" width="1.80" height="1.20" fill="#9aa7b0" opacity=".74"/><rect x="736.00" y="150.30" width="6.20" height="1.20" fill="#c0c2c4" opacity=".57"/><rect x="743.40" y="150.40" width="11.60" height="0.90" fill="#8d8a7a" opacity=".45"/><rect x="736.40" y="152.70" width="1.80" height="1.20" fill="#9aa7b0" opacity=".74"/><rect x="739.00" y="153.00" width="4.00" height="1.20" fill="#c0c2c4" opacity=".57"/><rect x="736.40" y="155.40" width="1.80" height="1.20" fill="#9aa7b0" opacity=".74"/><rect x="739.00" y="155.70" width="7.40" height="1.20" fill="#c0c2c4" opacity=".57"/><rect x="738.60" y="158.10" width="1.80" height="1.20" fill="#c9ccce" opacity=".74"/><rect x="741.20" y="158.40" width="8.40" height="1.20" fill="#c0c2c4" opacity=".57"/><rect x="738.60" y="160.80" width="1.80" height="1.20" fill="#c9ccce" opacity=".74"/><rect x="741.20" y="161.10" width="10.20" height="1.20" fill="#c0c2c4" opacity=".57"/><rect x="728.00" y="162.80" width="50.80" height="2.90" fill="#0d293e"/><rect x="735.40" y="163.30" width="1.70" height="1.90" fill="#d9c14a"/><rect x="737.80" y="163.70" width="6.60" height="1.20" fill="#c9cbcd" opacity=".66"/><rect x="730.80" y="166.50" width="1.80" height="1.60" fill="#5f9e6e" opacity=".74"/><rect x="733.20" y="166.70" width="15.40" height="1.20" fill="#bbbdbf" opacity=".57"/><rect x="731.40" y="169.20" width="1.80" height="1.60" fill="#3e9ad0" opacity=".74"/><rect x="733.80" y="169.40" width="20.40" height="1.20" fill="#bbbdbf" opacity=".57"/><rect x="728.60" y="204.50" width="37.08" height="0.90" fill="#6a6d6f" rx="0.4"/><rect x="778.80" y="146.00" width="8.00" height="60.20" fill="#313335"/><rect x="786.50" y="146.00" width="0.3" height="60.20" fill="#4a4a4a"/><rect x="786.80" y="146.00" width="145.10" height="60.20" fill="#2b2b2b"/><rect x="786.80" y="151.40" width="142.50" height="3.40" fill="#323232"/><rect x="929.10" y="146.00" width="2.80" height="60.20" fill="#313335"/><rect x="929.70" y="149.00" width="1.40" height="9.00" fill="#55585a" opacity=".57"/><rect x="925.50" y="147.00" width="1.90" height="1.60" fill="#4c9e47" opacity=".74" rx="0.4"/><rect x="781.40" y="145.60" width="1.60" height="1.00" fill="#7c7f81" opacity=".49"/><rect x="788.20" y="145.45" width="6.00" height="1.30" fill="#a9b7c6" opacity=".51"/><rect x="795.60" y="145.45" width="7.60" height="1.30" fill="#8888c6" opacity=".51"/><rect x="803.60" y="145.45" width="29.60" height="1.30" fill="#6a8759" opacity=".51"/><rect x="833.20" y="145.45" width="2.00" height="1.30" fill="#a9b7c6" opacity=".51"/><rect x="781.40" y="149.20" width="1.60" height="1.00" fill="#7c7f81" opacity=".49"/><rect x="788.20" y="149.05" width="6.00" height="1.30" fill="#a9b7c6" opacity=".51"/><rect x="795.60" y="149.05" width="4.60" height="1.30" fill="#a9b7c6" opacity=".51"/><rect x="801.20" y="149.05" width="4.00" height="1.30" fill="#cc7832" opacity=".51"/><rect x="806.20" y="149.05" width="2.00" height="1.30" fill="#a9b7c6" opacity=".51"/><rect x="809.20" y="149.05" width="2.60" height="1.30" fill="#cc7832" opacity=".51"/><rect x="812.60" y="149.05" width="6.60" height="1.30" fill="#a9b7c6" opacity=".51"/><rect x="781.40" y="152.60" width="1.60" height="1.00" fill="#7c7f81" opacity=".49"/><rect x="788.20" y="152.45" width="10.40" height="1.30" fill="#a9b7c6" opacity=".51"/><rect x="800.20" y="152.45" width="1.60" height="1.30" fill="#d7d96a" opacity=".51"/><rect x="802.80" y="152.45" width="3.40" height="1.30" fill="#cc7832" opacity=".51"/><rect x="807.20" y="152.45" width="2.00" height="1.30" fill="#a9b7c6" opacity=".51"/><rect x="810.20" y="152.45" width="2.40" height="1.30" fill="#cc7832" opacity=".51"/><rect x="813.60" y="152.45" width="4.20" height="1.30" fill="#a9b7c6" opacity=".51"/><rect x="818.60" y="152.45" width="2.00" height="1.30" fill="#cc7832" opacity=".51"/><rect x="821.60" y="152.45" width="11.60" height="1.30" fill="#a9b7c6" opacity=".51"/><rect x="835.20" y="152.45" width="1.40" height="1.30" fill="#d7d96a" opacity=".51"/><rect x="781.40" y="156.10" width="1.60" height="1.00" fill="#7c7f81" opacity=".49"/><rect x="788.20" y="155.95" width="5.60" height="1.30" fill="#8888c6" opacity=".51"/><rect x="793.80" y="155.95" width="12.80" height="1.30" fill="#a9b7c6" opacity=".51"/><rect x="724.80" y="206.20" width="207.10" height="4.00" fill="#3b4856"/><rect x="728.60" y="207.70" width="4.20" height="1.20" fill="#bbbdbf" opacity=".57"/><rect x="734.00" y="209.60" width="12.80" height="0.80" fill="#4a88c7"/><rect x="736.40" y="207.40" width="1.70" height="1.70" fill="#d9c14a"/><rect x="738.80" y="207.70" width="5.40" height="1.20" fill="#c5c7c9" opacity=".61"/><rect x="924.50" y="207.40" width="1.80" height="1.80" fill="#b4b6b8" opacity=".66"/><rect x="927.90" y="208.10" width="1.80" height="0.60" fill="#b4b6b8" opacity=".66"/><rect x="724.80" y="210.40" width="3.20" height="33.80" fill="#3c3f41"/><rect x="725.70" y="220.40" width="1.30" height="9.00" fill="#8f9294" opacity=".49"/><rect x="725.70" y="232.40" width="1.30" height="11.00" fill="#8f9294" opacity=".49"/><rect x="728.00" y="210.40" width="9.60" height="33.80" fill="#3c3f41"/><rect x="737.30" y="210.40" width="0.3" height="33.80" fill="#323232"/><rect x="729.50" y="211.90" width="1.90" height="2.00" fill="#4fa04a" opacity=".70"/><rect x="733.70" y="211.90" width="1.90" height="2.00" fill="#6e7173" opacity=".70"/><rect x="729.50" y="216.00" width="1.90" height="2.00" fill="#b9bbbd" opacity=".70"/><rect x="733.70" y="216.00" width="1.90" height="2.00" fill="#6e7173" opacity=".70"/><rect x="729.50" y="220.10" width="1.90" height="2.00" fill="#6e7173" opacity=".70"/><rect x="733.70" y="220.10" width="1.90" height="2.00" fill="#b9bbbd" opacity=".70"/><rect x="729.50" y="224.20" width="1.90" height="2.00" fill="#b9bbbd" opacity=".70"/><rect x="733.20" y="223.70" width="3.00" height="3.00" fill="#55595c"/><rect x="733.70" y="224.20" width="1.90" height="2.00" fill="#d5d7d9" opacity=".70"/><rect x="729.50" y="228.30" width="1.90" height="2.00" fill="#b9bbbd" opacity=".70"/><rect x="733.70" y="228.30" width="1.90" height="2.00" fill="#b9bbbd" opacity=".70"/><rect x="733.70" y="232.40" width="1.90" height="2.00" fill="#b9bbbd" opacity=".70"/><rect x="737.60" y="210.40" width="194.30" height="33.80" fill="#2b2b2b"/><rect x="737.20" y="210.80" width="164.80" height="1.20" fill="#bbbbbb" opacity=".34"/><rect x="737.20" y="214.10" width="24.80" height="1.20" fill="#bbbbbb" opacity=".34"/><rect x="762.60" y="214.10" width="8.40" height="1.20" fill="#5fae57" opacity=".34"/><rect x="737.20" y="217.40" width="12.80" height="1.20" fill="#bbbbbb" opacity=".34"/><rect x="737.20" y="224.10" width="40.40" height="1.20" fill="#bbbbbb" opacity=".34"/><rect x="724.80" y="244.20" width="207.10" height="3.30" fill="#3c3f41"/><rect x="724.80" y="244.20" width="207.10" height="0.3" fill="#2e2e2e"/><rect x="729.40" y="245.10" width="1.50" height="1.50" fill="#c0c2c4" opacity=".66"/><rect x="731.60" y="245.30" width="12.40" height="1.10" fill="#b4b6b8" opacity=".51"/><rect x="746.20" y="244.40" width="9.80" height="3.00" fill="#2d2f30"/><rect x="747.40" y="245.10" width="1.50" height="1.50" fill="#c0c2c4" opacity=".66"/><rect x="749.60" y="245.30" width="5.20" height="1.10" fill="#b4b6b8" opacity=".51"/><rect x="758.20" y="245.10" width="1.50" height="1.50" fill="#c0c2c4" opacity=".66"/><rect x="760.40" y="245.30" width="6.80" height="1.10" fill="#b4b6b8" opacity=".51"/><rect x="770.60" y="245.10" width="1.50" height="1.50" fill="#c0c2c4" opacity=".66"/><rect x="772.80" y="245.30" width="10.40" height="1.10" fill="#b4b6b8" opacity=".51"/><rect x="786.60" y="245.10" width="1.50" height="1.50" fill="#c0c2c4" opacity=".66"/><rect x="788.80" y="245.30" width="9.60" height="1.10" fill="#b4b6b8" opacity=".51"/><rect x="801.80" y="245.10" width="1.50" height="1.50" fill="#c0c2c4" opacity=".66"/><rect x="804.00" y="245.30" width="17.00" height="1.10" fill="#b4b6b8" opacity=".51"/><rect x="824.40" y="245.10" width="1.50" height="1.50" fill="#c0c2c4" opacity=".66"/><rect x="826.60" y="245.30" width="15.80" height="1.10" fill="#b4b6b8" opacity=".51"/><rect x="845.80" y="245.10" width="1.50" height="1.50" fill="#c0c2c4" opacity=".66"/><rect x="848.00" y="245.30" width="9.40" height="1.10" fill="#b4b6b8" opacity=".51"/><rect x="724.80" y="247.50" width="207.10" height="2.50" fill="#3c3f41"/><rect x="724.80" y="247.50" width="207.10" height="0.3" fill="#4b4b4b"/><rect x="725.80" y="248.20" width="1.30" height="1.30" fill="#a9acae" opacity=".57"/><rect x="728.20" y="248.35" width="134.40" height="1.00" fill="#a9acae" opacity=".45"/><rect x="875.90" y="248.35" width="50.00" height="1.00" fill="#a9acae" opacity=".45"/><rect x="928.30" y="248.10" width="1.80" height="1.50" fill="#c9cbcd" opacity=".66"/></g></svg>
<svg style="left:723px;top:266px;overflow:hidden" width="217" height="126" viewBox="723 266 217 126"><defs><linearGradient id="g14" x1="0" y1="0" x2="0" y2="1"><stop offset="0%" stop-color="#cbdef0"/><stop offset="100%" stop-color="#b2cde8"/></linearGradient><linearGradient id="g15" x1="0" y1="0" x2="1" y2="0"><stop offset="0%" stop-color="#3592c4"/><stop offset="100%" stop-color="#62b543"/></linearGradient><clipPath id="c16"><rect x="723.00" y="266.30" width="216.50" height="125.10"/></clipPath></defs><g clip-path="url(#c16)"><rect x="723.00" y="266.30" width="216.50" height="125.10" fill="#b4cde8"/><rect x="723.00" y="266.30" width="216.50" height="4.60" fill="url(#g14)"/><rect x="723.00" y="270.90" width="1.40" height="120.50" fill="#bdd1e8"/><rect x="937.80" y="270.90" width="1.70" height="120.50" fill="#8fb0da"/><rect x="723.00" y="390.50" width="216.50" height="0.90" fill="#aec8e6"/><rect x="725.10" y="267.50" width="2.20" height="2.20" fill="#3a3d34" rx="0.4"/><rect x="728.50" y="268.20" width="24.00" height="1.00" fill="#55606c" opacity=".53"/><rect x="922.45" y="266.95" width="8.50" height="2.00" fill="#c4d4e4" opacity=".8" stroke="#9db2c9" stroke-width="0.3"/><rect x="931.15" y="266.85" width="6.60" height="2.20" fill="#cd4a3c" stroke="#9a4038" stroke-width="0.3"/><rect x="724.30" y="270.80" width="213.60" height="119.80" fill="#3c3f41"/><rect x="725.50" y="272.30" width="3.60" height="1.20" fill="#aeb1b3" opacity=".37"/><rect x="730.95" y="272.30" width="4.00" height="1.20" fill="#aeb1b3" opacity=".37"/><rect x="736.80" y="272.30" width="4.70" height="1.20" fill="#aeb1b3" opacity=".37"/><rect x="743.35" y="272.30" width="7.50" height="1.20" fill="#aeb1b3" opacity=".37"/><rect x="752.70" y="272.30" width="4.90" height="1.20" fill="#aeb1b3" opacity=".37"/><rect x="759.45" y="272.30" width="7.70" height="1.20" fill="#aeb1b3" opacity=".37"/><rect x="769.00" y="272.30" width="3.60" height="1.20" fill="#aeb1b3" opacity=".37"/><rect x="774.45" y="272.30" width="4.90" height="1.20" fill="#aeb1b3" opacity=".37"/><rect x="781.20" y="272.30" width="3.30" height="1.20" fill="#aeb1b3" opacity=".37"/><rect x="786.35" y="272.30" width="6.60" height="1.20" fill="#aeb1b3" opacity=".37"/><rect x="794.80" y="272.30" width="4.20" height="1.20" fill="#aeb1b3" opacity=".37"/><rect x="726.50" y="276.20" width="14.60" height="1.30" fill="#c8cacc" opacity=".61"/><rect x="743.50" y="275.90" width="1.80" height="1.90" fill="#d9b74a"/><rect x="745.90" y="276.20" width="8.00" height="1.20" fill="#aeb1b3" opacity=".49"/><rect x="888.90" y="275.90" width="2.60" height="2.00" fill="#a9acae" opacity=".66" rx="0.8"/><rect x="895.10" y="275.70" width="12.00" height="2.50" fill="none" stroke="#5e6062" stroke-width="0.4"/><rect x="896.10" y="276.10" width="1.80" height="1.70" fill="#d9c14a"/><rect x="898.90" y="276.40" width="5.00" height="1.10" fill="#aeb1b3" opacity=".49"/><rect x="910.10" y="276.00" width="1.80" height="1.90" fill="#4fa04a"/><rect x="914.30" y="276.00" width="2.00" height="1.90" fill="#4fa04a"/><rect x="918.50" y="276.00" width="1.80" height="1.90" fill="#6d7072"/><rect x="922.50" y="276.00" width="1.80" height="1.90" fill="#5d6062"/><rect x="926.90" y="275.90" width="1.90" height="2.00" fill="#aeb1b3" opacity=".66"/><rect x="930.90" y="275.80" width="2.20" height="2.20" fill="#f0a732" rx="1.10" ry="1.10"/><rect x="934.50" y="275.80" width="2.20" height="2.20" fill="url(#g15)" rx="0.88" ry="0.88"/><rect x="724.30" y="278.80" width="3.20" height="106.00" fill="#3c3f41"/><rect x="727.20" y="278.80" width="0.3" height="106.00" fill="#323232"/><rect x="725.00" y="279.80" width="1.60" height="7.60" fill="#4e5254"/><rect x="725.40" y="280.40" width="0.80" height="4.20" fill="#c5c7c9" opacity=".66"/><rect x="725.20" y="285.40" width="1.30" height="1.40" fill="#e8e8e8" opacity=".66"/><rect x="727.50" y="278.80" width="53.30" height="4.60" fill="#3c3f41"/><rect x="729.10" y="280.20" width="1.80" height="1.70" fill="#4a88c7" opacity=".66"/><rect x="731.90" y="280.40" width="7.00" height="1.20" fill="#bbbdbf" opacity=".57"/><rect x="740.90" y="280.70" width="1.20" height="0.70" fill="#bbbdbf" opacity=".57"/><rect x="759.80" y="280.10" width="1.90" height="1.90" fill="#b4b6b8" opacity="0.8"/><rect x="763.90" y="280.10" width="1.90" height="1.90" fill="#b4b6b8" opacity="0.8"/><rect x="768.00" y="280.10" width="1.90" height="1.90" fill="#b4b6b8" opacity="0.45"/><rect x="772.10" y="280.10" width="1.90" height="1.90" fill="#b4b6b8" opacity="0.8"/><rect x="776.20" y="280.10" width="1.90" height="1.90" fill="#b4b6b8" opacity="0.8"/><rect x="780.80" y="278.80" width="157.10" height="4.60" fill="#3c3f41"/><rect x="780.80" y="283.10" width="157.10" height="0.3" fill="#323232"/><rect x="781.60" y="278.80" width="14.00" height="4.60" fill="#4e5254"/><rect x="781.60" y="282.80" width="14.00" height="0.6" fill="#5a7ea6"/><rect x="782.80" y="280.10" width="1.70" height="1.90" fill="#e0c24a"/><rect x="785.40" y="280.40" width="6.40" height="1.20" fill="#c5c7c9" opacity=".57"/><rect x="727.50" y="283.40" width="53.30" height="62.90" fill="#3c3f41"/><rect x="727.50" y="283.50" width="53.30" height="1.80" fill="#3c3f41"/><rect x="730.50" y="284.30" width="1.80" height="1.60" fill="#9aa7b0"/><rect x="732.90" y="284.40" width="13.40" height="1.30" fill="#d3d5d7" opacity=".70"/><rect x="747.30" y="284.60" width="31.00" height="0.90" fill="#7d8082" opacity=".41"/><rect x="727.50" y="285.20" width="53.30" height="15.80" fill="#575140"/><rect x="732.90" y="285.90" width="1.80" height="1.66" fill="#9aa7b0" opacity=".74"/><rect x="735.50" y="286.20" width="6.20" height="1.20" fill="#c0c2c4" opacity=".57"/><rect x="742.90" y="286.30" width="11.60" height="0.90" fill="#8d8a7a" opacity=".45"/><rect x="735.90" y="289.06" width="1.80" height="1.66" fill="#9aa7b0" opacity=".74"/><rect x="738.50" y="289.36" width="4.00" height="1.20" fill="#c0c2c4" opacity=".57"/><rect x="735.90" y="292.22" width="1.80" height="1.66" fill="#9aa7b0" opacity=".74"/><rect x="738.50" y="292.52" width="7.40" height="1.20" fill="#c0c2c4" opacity=".57"/><rect x="738.10" y="295.38" width="1.80" height="1.66" fill="#c9ccce" opacity=".74"/><rect x="740.70" y="295.68" width="8.40" height="1.20" fill="#c0c2c4" opacity=".57"/><rect x="738.10" y="298.54" width="1.80" height="1.66" fill="#c9ccce" opacity=".74"/><rect x="740.70" y="298.84" width="10.20" height="1.20" fill="#c0c2c4" opacity=".57"/><rect x="727.50" y="301.00" width="53.30" height="3.00" fill="#0d293e"/><rect x="734.90" y="301.50" width="1.70" height="2.00" fill="#d9c14a"/><rect x="737.30" y="301.90" width="6.60" height="1.20" fill="#c9cbcd" opacity=".66"/><rect x="730.30" y="304.80" width="1.80" height="1.60" fill="#5f9e6e" opacity=".74"/><rect x="732.70" y="305.00" width="15.40" height="1.20" fill="#bbbdbf" opacity=".57"/><rect x="730.90" y="307.96" width="1.80" height="1.60" fill="#3e9ad0" opacity=".74"/><rect x="733.30" y="308.16" width="20.40" height="1.20" fill="#bbbdbf" opacity=".57"/><rect x="728.10" y="344.60" width="38.91" height="0.90" fill="#6a6d6f" rx="0.4"/><rect x="780.80" y="283.40" width="8.20" height="62.90" fill="#313335"/><rect x="788.70" y="283.40" width="0.3" height="62.90" fill="#4a4a4a"/><rect x="789.00" y="283.40" width="148.90" height="62.90" fill="#2b2b2b"/><rect x="789.00" y="289.80" width="146.30" height="3.40" fill="#323232"/><rect x="935.10" y="283.40" width="2.80" height="62.90" fill="#313335"/><rect x="935.70" y="286.40" width="1.40" height="9.00" fill="#55585a" opacity=".57"/><rect x="931.50" y="284.40" width="1.90" height="1.60" fill="#4c9e47" opacity=".74" rx="0.4"/><rect x="783.40" y="283.90" width="1.60" height="1.00" fill="#7c7f81" opacity=".49"/><rect x="790.40" y="283.75" width="6.00" height="1.30" fill="#a9b7c6" opacity=".51"/><rect x="797.80" y="283.75" width="7.60" height="1.30" fill="#8888c6" opacity=".51"/><rect x="805.80" y="283.75" width="24.60" height="1.30" fill="#6a8759" opacity=".51"/><rect x="831.40" y="283.75" width="21.00" height="1.30" fill="#a9b7c6" opacity=".51"/><rect x="783.40" y="287.50" width="1.60" height="1.00" fill="#7c7f81" opacity=".49"/><rect x="790.40" y="287.35" width="3.00" height="1.30" fill="#a9b7c6" opacity=".51"/><rect x="793.80" y="287.35" width="4.20" height="1.30" fill="#d7a657" opacity=".51"/><rect x="798.40" y="287.35" width="19.40" height="1.30" fill="#a9b7c6" opacity=".51"/><rect x="783.40" y="291.00" width="1.60" height="1.00" fill="#7c7f81" opacity=".49"/><rect x="790.40" y="290.85" width="5.60" height="1.30" fill="#8888c6" opacity=".51"/><rect x="796.20" y="290.85" width="5.60" height="1.30" fill="#6f9a73" opacity=".51"/><rect x="724.30" y="346.30" width="213.60" height="4.00" fill="#3b4856"/><rect x="728.10" y="347.80" width="4.20" height="1.20" fill="#bbbdbf" opacity=".57"/><rect x="733.50" y="349.70" width="12.80" height="0.80" fill="#4a88c7"/><rect x="735.90" y="347.50" width="1.70" height="1.70" fill="#d9c14a"/><rect x="738.30" y="347.80" width="5.40" height="1.20" fill="#c5c7c9" opacity=".61"/><rect x="930.50" y="347.50" width="1.80" height="1.80" fill="#b4b6b8" opacity=".66"/><rect x="933.90" y="348.20" width="1.80" height="0.60" fill="#b4b6b8" opacity=".66"/><rect x="724.30" y="350.50" width="3.20" height="34.30" fill="#3c3f41"/><rect x="725.20" y="360.50" width="1.30" height="9.00" fill="#8f9294" opacity=".49"/><rect x="725.20" y="372.50" width="1.30" height="11.00" fill="#8f9294" opacity=".49"/><rect x="727.50" y="350.50" width="9.60" height="34.30" fill="#3c3f41"/><rect x="736.80" y="350.50" width="0.3" height="34.30" fill="#323232"/><rect x="729.00" y="352.00" width="1.90" height="2.00" fill="#4fa04a" opacity=".70"/><rect x="733.20" y="352.00" width="1.90" height="2.00" fill="#6e7173" opacity=".70"/><rect x="729.00" y="356.10" width="1.90" height="2.00" fill="#b9bbbd" opacity=".70"/><rect x="733.20" y="356.10" width="1.90" height="2.00" fill="#6e7173" opacity=".70"/><rect x="729.00" y="360.20" width="1.90" height="2.00" fill="#6e7173" opacity=".70"/><rect x="733.20" y="360.20" width="1.90" height="2.00" fill="#b9bbbd" opacity=".70"/><rect x="729.00" y="364.30" width="1.90" height="2.00" fill="#b9bbbd" opacity=".70"/><rect x="732.70" y="363.80" width="3.00" height="3.00" fill="#55595c"/><rect x="733.20" y="364.30" width="1.90" height="2.00" fill="#d5d7d9" opacity=".70"/><rect x="729.00" y="368.40" width="1.90" height="2.00" fill="#b9bbbd" opacity=".70"/><rect x="733.20" y="368.40" width="1.90" height="2.00" fill="#b9bbbd" opacity=".70"/><rect x="733.20" y="372.50" width="1.90" height="2.00" fill="#b9bbbd" opacity=".70"/><rect x="737.10" y="350.50" width="200.80" height="34.30" fill="#2b2b2b"/><rect x="737.60" y="350.80" width="169.40" height="1.20" fill="#bbbbbb" opacity=".34"/><rect x="737.60" y="354.30" width="24.40" height="1.20" fill="#bbbbbb" opacity=".34"/><rect x="762.60" y="354.30" width="13.40" height="1.20" fill="#5fae57" opacity=".34"/><rect x="737.60" y="357.80" width="30.40" height="1.20" fill="#bbbbbb" opacity=".34"/><rect x="737.60" y="364.60" width="41.00" height="1.20" fill="#bbbbbb" opacity=".34"/><rect x="724.30" y="384.80" width="213.60" height="3.30" fill="#3c3f41"/><rect x="724.30" y="384.80" width="213.60" height="0.3" fill="#2e2e2e"/><rect x="728.90" y="385.70" width="1.50" height="1.50" fill="#c0c2c4" opacity=".66"/><rect x="731.10" y="385.90" width="12.40" height="1.10" fill="#b4b6b8" opacity=".51"/><rect x="745.70" y="385.00" width="9.80" height="3.00" fill="#2d2f30"/><rect x="746.90" y="385.70" width="1.50" height="1.50" fill="#c0c2c4" opacity=".66"/><rect x="749.10" y="385.90" width="5.20" height="1.10" fill="#b4b6b8" opacity=".51"/><rect x="757.70" y="385.70" width="1.50" height="1.50" fill="#c0c2c4" opacity=".66"/><rect x="759.90" y="385.90" width="6.80" height="1.10" fill="#b4b6b8" opacity=".51"/><rect x="770.10" y="385.70" width="1.50" height="1.50" fill="#c0c2c4" opacity=".66"/><rect x="772.30" y="385.90" width="10.40" height="1.10" fill="#b4b6b8" opacity=".51"/><rect x="786.10" y="385.70" width="1.50" height="1.50" fill="#c0c2c4" opacity=".66"/><rect x="788.30" y="385.90" width="9.60" height="1.10" fill="#b4b6b8" opacity=".51"/><rect x="801.30" y="385.70" width="1.50" height="1.50" fill="#c0c2c4" opacity=".66"/><rect x="803.50" y="385.90" width="17.00" height="1.10" fill="#b4b6b8" opacity=".51"/><rect x="823.90" y="385.70" width="1.50" height="1.50" fill="#c0c2c4" opacity=".66"/><rect x="826.10" y="385.90" width="15.80" height="1.10" fill="#b4b6b8" opacity=".51"/><rect x="845.30" y="385.70" width="1.50" height="1.50" fill="#c0c2c4" opacity=".66"/><rect x="847.50" y="385.90" width="9.40" height="1.10" fill="#b4b6b8" opacity=".51"/><rect x="724.30" y="388.10" width="213.60" height="2.50" fill="#3c3f41"/><rect x="724.30" y="388.10" width="213.60" height="0.3" fill="#4b4b4b"/><rect x="725.30" y="388.80" width="1.30" height="1.30" fill="#a9acae" opacity=".57"/><rect x="727.70" y="388.95" width="138.56" height="1.00" fill="#a9acae" opacity=".45"/><rect x="881.90" y="388.95" width="50.00" height="1.00" fill="#a9acae" opacity=".45"/><rect x="934.30" y="388.70" width="1.80" height="1.50" fill="#c9cbcd" opacity=".66"/></g></svg>
<div style="left:947.00px;top:441.80px;width:5.20px;height:5.40px;border:0.5px solid #9a9a9a;background:#fff;"></div>
<svg id="tx" width="1024" height="565" viewBox="0 0 1024 565">
<text x="22.50" y="14" font-size="4.8" fill="#2a2a2a" textLength="18.60" stroke="#2a2a2a" stroke-width="0.14" >自动保存</text>
<text x="53.90" y="14" font-size="4.8" fill="#2a2a2a" stroke="#2a2a2a" stroke-width="0.14" >关</text>
<text x="118.80" y="14" font-size="4.9" fill="#2a2a2a" textLength="156.60" stroke="#2a2a2a" stroke-width="0.14" >可视化程序设计实验报告实验2-数媒2002班-200103060206-王梓烨.docx</text>
<text x="278.80" y="14" font-size="5" fill="#777" stroke="#777" stroke-width="0.14" >·</text>
<text x="284.00" y="14" font-size="4.8" fill="#2a2a2a" textLength="24.00" stroke="#2a2a2a" stroke-width="0.14" >兼容性模式</text>
<text x="309.60" y="14" font-size="3.6" fill="#666" stroke="#666" stroke-width="0.14" >•</text>
<text x="313.70" y="14" font-size="4.8" fill="#2a2a2a" textLength="38.60" stroke="#2a2a2a" stroke-width="0.14" >已保存到这台电脑</text>
<text x="460.00" y="15" font-size="5.4" fill="#6e6e6e" stroke="#6e6e6e" stroke-width="0.05" >搜索</text>
<text x="10.20" y="30" font-size="5.1" fill="#2a2a2a" stroke="#2a2a2a" stroke-width="0.14" >文件</text>
<text x="30.00" y="30" font-size="5.1" fill="#222" font-weight="700" stroke="#222" stroke-width="0.14" >开始</text>
<text x="48.10" y="30" font-size="5.1" fill="#2a2a2a" stroke="#2a2a2a" stroke-width="0.14" >插入</text>
<text x="66.00" y="30" font-size="5.1" fill="#2a2a2a" stroke="#2a2a2a" stroke-width="0.14" >绘图</text>
<text x="83.80" y="30" font-size="5.1" fill="#2a2a2a" stroke="#2a2a2a" stroke-width="0.14" >设计</text>
<text x="101.60" y="30" font-size="5.1" fill="#2a2a2a" stroke="#2a2a2a" stroke-width="0.14" >布局</text>
<text x="119.70" y="30" font-size="5.1" fill="#2a2a2a" stroke="#2a2a2a" stroke-width="0.14" >引用</text>
<text x="137.60" y="30" font-size="5.1" fill="#2a2a2a" stroke="#2a2a2a" stroke-width="0.14" >邮件</text>
<text x="155.50" y="30" font-size="5.1" fill="#2a2a2a" stroke="#2a2a2a" stroke-width="0.14" >审阅</text>
<text x="173.30" y="30" font-size="5.1" fill="#2a2a2a" stroke="#2a2a2a" stroke-width="0.14" >视图</text>
<text x="191.40" y="30" font-size="5.1" fill="#2a2a2a" stroke="#2a2a2a" stroke-width="0.14" >帮助</text>
<text x="209.20" y="30" font-size="5.1" fill="#2b63c0" stroke="#2b63c0" stroke-width="0.14" >表设计</text>
<text x="232.40" y="30" font-size="5.1" fill="#2b63c0" stroke="#2b63c0" stroke-width="0.14" >表布局</text>
<text x="1002.20" y="30" font-size="5.0" fill="#fff" font-weight="700" stroke="#fff" stroke-width="0.14" >共享</text>
<text x="7.50" y="559" font-size="4.7" fill="#444" textLength="35.90" stroke="#444" stroke-width="0.14" >第 1 页，共 1 页</text>
<text x="51.60" y="559" font-size="4.7" fill="#444" textLength="19.40" stroke="#444" stroke-width="0.14" >538 个字</text>
<text x="90.60" y="559" font-size="4.7" fill="#444" textLength="41.40" stroke="#444" stroke-width="0.14" >简体中文(中国大陆)</text>
<text x="888.60" y="559" font-size="4.7" fill="#444" stroke="#444" stroke-width="0.14" >专注</text>
<text x="1008.40" y="559" font-size="4.8" fill="#444" stroke="#444" stroke-width="0.14" >100%</text>
<text x="15.00" y="56" font-size="4.9" fill="#333" stroke="#333" stroke-width="0.14" >粘贴</text>
<text x="38.20" y="43" font-size="4.9" fill="#ababab" stroke="#ababab" stroke-width="0.14" >剪切</text>
<text x="38.20" y="53" font-size="4.9" fill="#ababab" stroke="#ababab" stroke-width="0.14" >复制</text>
<text x="38.20" y="63" font-size="4.9" fill="#333" stroke="#333" stroke-width="0.14" >格式刷</text>
<text x="23.20" y="72" font-size="4.9" fill="#333" stroke="#333" stroke-width="0.14" >剪贴板</text>
<text x="64.00" y="46" font-size="4.7" fill="#222" stroke="#222" stroke-width="0.14" >宋体 (中文正文)</text>
<text x="113.40" y="46" font-size="4.7" fill="#222" stroke="#222" stroke-width="0.14" >二号</text>
<text x="133.00" y="46" font-size="6.6" fill="#444" stroke="#444" stroke-width="0.14" >A</text>
<text x="143.90" y="46" font-size="5.6" fill="#444" stroke="#444" stroke-width="0.14" >A</text>
<text x="155.00" y="46" font-size="5.4" fill="#444" stroke="#444" stroke-width="0.14" >Aa</text>
<text x="172.40" y="46" font-size="6.4" fill="#444" font-style="italic" stroke="#444" stroke-width="0.14" >A</text>
<text x="194.70" y="46" font-size="5.4" fill="#444" stroke="#444" stroke-width="0.14" >A</text>
<text x="65.20" y="59" font-size="6.0" fill="#222" font-weight="700" stroke="#222" stroke-width="0.14" >B</text>
<text x="76.80" y="58" font-size="5.4" fill="#444" font-style="italic" class="f-r" stroke="#444" stroke-width="0.14" >I</text>
<text x="86.00" y="58" font-size="5.2" fill="#444" stroke="#444" stroke-width="0.14" >U</text>
<text x="101.80" y="58" font-size="4.6" fill="#444" stroke="#444" stroke-width="0.14" >ab</text>
<text x="113.20" y="58" font-size="5" fill="#444" stroke="#444" stroke-width="0.14" >x</text>
<text x="116.00" y="59" font-size="2.8" fill="#2b7cd3" stroke="#2b7cd3" stroke-width="0.14" >2</text>
<text x="124.00" y="59" font-size="5" fill="#444" stroke="#444" stroke-width="0.14" >x</text>
<text x="126.80" y="56" font-size="2.8" fill="#2b7cd3" stroke="#2b7cd3" stroke-width="0.14" >2</text>
<text x="133.60" y="59" font-size="7.2" fill="#2b7cd3" font-weight="700" stroke="#2b7cd3" stroke-width="0.14" >A</text>
<text x="167.70" y="58" font-size="5.6" fill="#444" stroke="#444" stroke-width="0.14" >A</text>
<text x="184.70" y="58" font-size="5.2" fill="#444" stroke="#444" stroke-width="0.14" >A</text>
<text x="194.30" y="58" font-size="4.2" fill="#444" stroke="#444" stroke-width="0.14" >字</text>
<text x="124.30" y="72" font-size="4.9" fill="#333" stroke="#333" stroke-width="0.14" >字体</text>
<text x="255.80" y="72" font-size="4.9" fill="#333" stroke="#333" stroke-width="0.14" >段落</text>
<text x="340.75" y="50" font-size="7.3" fill="#111" text-anchor="middle" stroke="#111" stroke-width="0.14" >AaBbC</text>
<text x="340.75" y="59" font-size="4.75" fill="#3a3a3a" text-anchor="middle" stroke="#3a3a3a" stroke-width="0.14" >标题</text>
<svg x="358.3" y="40" width="23.5" height="13" style="overflow:hidden"><text x="0.2" y="10" font-size="9.7" font-weight="700" fill="#111">AaBb</text></svg>
<text x="370.05" y="59" font-size="4.75" fill="#3a3a3a" text-anchor="middle" stroke="#3a3a3a" stroke-width="0.14" >⌐ 标题 1</text>
<text x="398.15" y="50" font-size="7.3" fill="#222" text-anchor="middle" stroke="#222" stroke-width="0.14" >AaBbC</text>
<text x="398.15" y="59" font-size="4.75" fill="#3a3a3a" text-anchor="middle" stroke="#3a3a3a" stroke-width="0.14" >标题 2</text>
<text x="426.85" y="50" font-size="7.0" fill="#111" font-weight="700" text-anchor="middle" stroke="#111" stroke-width="0.14" >AaBbC</text>
<text x="426.85" y="59" font-size="4.75" fill="#3a3a3a" text-anchor="middle" stroke="#3a3a3a" stroke-width="0.14" >副标题</text>
<text x="455.55" y="50" font-size="5.8" fill="#666" text-anchor="middle" stroke="#666" stroke-width="0.14" >AaBbCcD</text>
<text x="455.55" y="59" font-size="4.75" fill="#3a3a3a" text-anchor="middle" stroke="#3a3a3a" stroke-width="0.14" >⌐ 普通(网...</text>
<text x="484.25" y="49" font-size="5.7" fill="#777" font-style="italic" class="f-r" text-anchor="middle" stroke="#777" stroke-width="0.14" >AaBbCcDd</text>
<text x="484.25" y="59" font-size="4.75" fill="#3a3a3a" text-anchor="middle" stroke="#3a3a3a" stroke-width="0.14" >强调</text>
<text x="512.95" y="50" font-size="6.0" fill="#111" font-weight="700" class="f-r" text-anchor="middle" stroke="#111" stroke-width="0.14" >AaBbCcD</text>
<text x="512.95" y="59" font-size="4.75" fill="#3a3a3a" text-anchor="middle" stroke="#3a3a3a" stroke-width="0.14" >要点</text>
<text x="541.65" y="48" font-size="5.1" fill="#111" text-anchor="middle" stroke="#111" stroke-width="0.14" >AaBbCcDd</text>
<text x="541.65" y="59" font-size="4.75" fill="#3a3a3a" text-anchor="middle" stroke="#3a3a3a" stroke-width="0.14" >⌐ 正文</text>
<text x="570.35" y="49" font-size="5.7" fill="#777" font-style="italic" class="f-r" text-anchor="middle" stroke="#777" stroke-width="0.14" >AaBbCcDd</text>
<text x="570.35" y="59" font-size="4.75" fill="#3a3a3a" text-anchor="middle" stroke="#3a3a3a" stroke-width="0.14" >不明显强调</text>
<text x="599.05" y="49" font-size="5.7" fill="#5b9bd5" font-style="italic" class="f-r" text-anchor="middle" stroke="#5b9bd5" stroke-width="0.14" >AaBbCcDd</text>
<text x="599.05" y="59" font-size="4.75" fill="#3a3a3a" text-anchor="middle" stroke="#3a3a3a" stroke-width="0.14" >明显强调</text>
<text x="627.75" y="49" font-size="5.6" fill="#666" class="f-r" text-anchor="middle" stroke="#666" stroke-width="0.14" >AABBCCD</text>
<text x="627.75" y="59" font-size="4.75" fill="#3a3a3a" text-anchor="middle" stroke="#3a3a3a" stroke-width="0.14" >不明显参考</text>
<text x="656.45" y="50" font-size="5.8" fill="#4a90d9" class="f-r" text-anchor="middle" stroke="#4a90d9" stroke-width="0.14" >AABBCCI</text>
<text x="656.45" y="59" font-size="4.75" fill="#3a3a3a" text-anchor="middle" stroke="#3a3a3a" stroke-width="0.14" >明显参考</text>
<text x="685.15" y="49" font-size="5.6" fill="#111" font-weight="700" font-style="italic" class="f-r" text-anchor="middle" stroke="#111" stroke-width="0.14" >AaBbCcDd</text>
<text x="685.15" y="59" font-size="4.75" fill="#3a3a3a" text-anchor="middle" stroke="#3a3a3a" stroke-width="0.14" >书籍标题</text>
<text x="510.30" y="72" font-size="4.9" fill="#333" stroke="#333" stroke-width="0.14" >样式</text>
<text x="727.30" y="43" font-size="4.9" fill="#333" stroke="#333" stroke-width="0.14" >查找</text>
<text x="727.30" y="53" font-size="4.9" fill="#333" stroke="#333" stroke-width="0.14" >替换</text>
<text x="727.30" y="63" font-size="4.9" fill="#333" stroke="#333" stroke-width="0.14" >选择</text>
<text x="729.00" y="72" font-size="4.9" fill="#333" stroke="#333" stroke-width="0.14" >编辑</text>
<text x="764.60" y="56" font-size="4.9" fill="#333" text-anchor="middle" stroke="#333" stroke-width="0.14" >加</text>
<text x="764.90" y="62" font-size="4.9" fill="#333" text-anchor="middle" stroke="#333" stroke-width="0.14" >载项</text>
<text x="757.60" y="72" font-size="4.9" fill="#333" stroke="#333" stroke-width="0.14" >加载项</text>
<text x="118.20" y="142" font-size="11.6" fill="#000" font-weight="700" class="f-r" textLength="138.80" >课程名称：可视化程序设计</text>
<path transform="translate(257.20,134.84) scale(1.528)" d="M3.4 0.3 V2.3 H0.6 M1.6 1.3 L0.6 2.3 L1.6 3.3" stroke="#7a7a7a" stroke-width="0.62" fill="none"/>
<text x="91.00" y="157" font-size="11.6" fill="#000" font-weight="700" class="f-r" textLength="197.00" >实验 <tspan font-family="Liberation Sans" font-size="11.4" font-weight="700">2-</tspan> 数据类型、运算符与内置函数 </text>
<path transform="translate(288.20,149.84) scale(1.528)" d="M3.4 0.3 V2.3 H0.6 M1.6 1.3 L0.6 2.3 L1.6 3.3" stroke="#7a7a7a" stroke-width="0.62" fill="none"/>
<text x="77.30" y="168" font-size="7.45" fill="#000" font-weight="700" class="f-r" >学生基本信息</text>
<path transform="translate(122.20,163.21) scale(0.982)" d="M3.4 0.3 V2.3 H0.6 M1.6 1.3 L0.6 2.3 L1.6 3.3" stroke="#7a7a7a" stroke-width="0.62" fill="none"/>
<text x="77.30" y="175" font-size="5.6" fill="#000" textLength="51.60" stroke="#000" stroke-width="0.14" >专业班级：数媒 2002</text>
<path transform="translate(129.10,171.56) scale(0.738)" d="M3.4 0.3 V2.3 H0.6 M1.6 1.3 L0.6 2.3 L1.6 3.3" stroke="#7a7a7a" stroke-width="0.62" fill="none"/>
<text x="77.30" y="182" font-size="5.6" fill="#000" stroke="#000" stroke-width="0.14" >姓名：王梓烨</text>
<path transform="translate(111.10,178.96) scale(0.738)" d="M3.4 0.3 V2.3 H0.6 M1.6 1.3 L0.6 2.3 L1.6 3.3" stroke="#7a7a7a" stroke-width="0.62" fill="none"/>
<text x="77.30" y="190" font-size="5.6" fill="#000" textLength="50.10" stroke="#000" stroke-width="0.14" >学号：200103060206</text>
<path transform="translate(127.60,186.36) scale(0.738)" d="M3.4 0.3 V2.3 H0.6 M1.6 1.3 L0.6 2.3 L1.6 3.3" stroke="#7a7a7a" stroke-width="0.62" fill="none"/>
<text x="77.30" y="197" font-size="5.6" fill="#000" textLength="39.20" stroke="#000" stroke-width="0.14" >日期：2023.9.13</text>
<path transform="translate(116.70,193.66) scale(0.738)" d="M3.4 0.3 V2.3 H0.6 M1.6 1.3 L0.6 2.3 L1.6 3.3" stroke="#7a7a7a" stroke-width="0.62" fill="none"/>
<text x="77.30" y="203" font-size="5.6" fill="#000" stroke="#000" stroke-width="0.14" ></text>
<path transform="translate(77.50,199.56) scale(0.738)" d="M3.4 0.3 V2.3 H0.6 M1.6 1.3 L0.6 2.3 L1.6 3.3" stroke="#7a7a7a" stroke-width="0.62" fill="none"/>
<text x="77.30" y="212" font-size="7.45" fill="#000" font-weight="700" class="f-r" >实验内容</text>
<path transform="translate(107.30,207.81) scale(0.982)" d="M3.4 0.3 V2.3 H0.6 M1.6 1.3 L0.6 2.3 L1.6 3.3" stroke="#7a7a7a" stroke-width="0.62" fill="none"/>
<text x="77.30" y="221" font-size="5.6" fill="#000" textLength="141.60" stroke="#000" stroke-width="0.14" >1）编写程序，输入任意大的自然数，输出各位数字之和。</text>
<path transform="translate(219.10,217.56) scale(0.738)" d="M3.4 0.3 V2.3 H0.6 M1.6 1.3 L0.6 2.3 L1.6 3.3" stroke="#7a7a7a" stroke-width="0.62" fill="none"/>
<text x="77.30" y="228" font-size="5.6" fill="#000" textLength="189.70" stroke="#000" stroke-width="0.14" >2）编写程序，输入两个集合 A 和 B，分别输出他们的交集，并集和差集 A-B。</text>
<path transform="translate(267.20,224.96) scale(0.738)" d="M3.4 0.3 V2.3 H0.6 M1.6 1.3 L0.6 2.3 L1.6 3.3" stroke="#7a7a7a" stroke-width="0.62" fill="none"/>
<text x="77.30" y="235" font-size="5.6" fill="#000" textLength="193.60" stroke="#000" stroke-width="0.14" >3）编写程序，输入一个自然数，输出他的二进制数，八进制数，十六进制数。</text>
<path transform="translate(271.10,232.16) scale(0.738)" d="M3.4 0.3 V2.3 H0.6 M1.6 1.3 L0.6 2.3 L1.6 3.3" stroke="#7a7a7a" stroke-width="0.62" fill="none"/>
<text x="77.30" y="243" font-size="5.6" fill="#000" textLength="220.10" stroke="#000" stroke-width="0.14" >4）编写程序，输入一个包含若干整数的列表，输出一个新列表，新列表中只包含原列表中</text>
<text x="77.30" y="250" font-size="5.6" fill="#000" stroke="#000" stroke-width="0.14" >的偶数。</text>
<path transform="translate(99.90,246.56) scale(0.738)" d="M3.4 0.3 V2.3 H0.6 M1.6 1.3 L0.6 2.3 L1.6 3.3" stroke="#7a7a7a" stroke-width="0.62" fill="none"/>
<text x="77.30" y="257" font-size="5.6" fill="#000" textLength="220.10" stroke="#000" stroke-width="0.14" >5）编写程序，输入一个包含若干整数的列表，输出一个新列表，新列表中所有元素都来自</text>
<text x="77.30" y="264" font-size="5.6" fill="#000" stroke="#000" stroke-width="0.14" >远列表，且降序排列。</text>
<path transform="translate(133.50,260.86) scale(0.738)" d="M3.4 0.3 V2.3 H0.6 M1.6 1.3 L0.6 2.3 L1.6 3.3" stroke="#7a7a7a" stroke-width="0.62" fill="none"/>
<text x="77.30" y="270" font-size="5.6" fill="#000" stroke="#000" stroke-width="0.14" ></text>
<path transform="translate(77.50,267.46) scale(0.738)" d="M3.4 0.3 V2.3 H0.6 M1.6 1.3 L0.6 2.3 L1.6 3.3" stroke="#7a7a7a" stroke-width="0.62" fill="none"/>
<text x="77.30" y="280" font-size="7.45" fill="#000" font-weight="700" class="f-r" >实验报告要求</text>
<path transform="translate(122.20,275.81) scale(0.982)" d="M3.4 0.3 V2.3 H0.6 M1.6 1.3 L0.6 2.3 L1.6 3.3" stroke="#7a7a7a" stroke-width="0.62" fill="none"/>
<text x="77.30" y="288" font-size="5.6" fill="#000" stroke="#000" stroke-width="0.14" >1）详细记载实验过程，文字描述并在关键步骤截图</text>
<path transform="translate(203.81,284.76) scale(0.738)" d="M3.4 0.3 V2.3 H0.6 M1.6 1.3 L0.6 2.3 L1.6 3.3" stroke="#7a7a7a" stroke-width="0.62" fill="none"/>
<text x="77.30" y="295" font-size="5.6" fill="#000" stroke="#000" stroke-width="0.14" >2）认真书写实验心得</text>
<path transform="translate(131.01,291.86) scale(0.738)" d="M3.4 0.3 V2.3 H0.6 M1.6 1.3 L0.6 2.3 L1.6 3.3" stroke="#7a7a7a" stroke-width="0.62" fill="none"/>
<text x="77.30" y="302" font-size="5.6" fill="#000" stroke="#000" stroke-width="0.14" >3）图文并茂，严禁抄袭</text>
<path transform="translate(136.61,298.96) scale(0.738)" d="M3.4 0.3 V2.3 H0.6 M1.6 1.3 L0.6 2.3 L1.6 3.3" stroke="#7a7a7a" stroke-width="0.62" fill="none"/>
<text x="77.30" y="308" font-size="5.6" fill="#000" stroke="#000" stroke-width="0.14" ></text>
<path transform="translate(77.50,305.36) scale(0.738)" d="M3.4 0.3 V2.3 H0.6 M1.6 1.3 L0.6 2.3 L1.6 3.3" stroke="#7a7a7a" stroke-width="0.62" fill="none"/>
<text x="77.30" y="318" font-size="7.45" fill="#000" font-weight="700" class="f-r" >实验过程</text>
<path transform="translate(107.30,314.01) scale(0.982)" d="M3.4 0.3 V2.3 H0.6 M1.6 1.3 L0.6 2.3 L1.6 3.3" stroke="#7a7a7a" stroke-width="0.62" fill="none"/>
<text x="77.30" y="326" font-size="5.6" fill="#000" textLength="137.90" stroke="#000" stroke-width="0.14" ><tspan font-weight="700">1.</tspan>编写程序，输入任意大的自然数，输出各位数字之和。</text>
<path transform="translate(215.40,322.96) scale(0.738)" d="M3.4 0.3 V2.3 H0.6 M1.6 1.3 L0.6 2.3 L1.6 3.3" stroke="#7a7a7a" stroke-width="0.62" fill="none"/>
<text x="77.30" y="461" font-size="5.6" fill="#000" textLength="189.00" stroke="#000" stroke-width="0.14" >2. 编写程序，输入两个集合 A 和 B，分别输出他们的交集，并集和差集 A-B。</text>
<path transform="translate(266.50,457.86) scale(0.738)" d="M3.4 0.3 V2.3 H0.6 M1.6 1.3 L0.6 2.3 L1.6 3.3" stroke="#7a7a7a" stroke-width="0.62" fill="none"/>
<text x="400.20" y="265" font-size="5.6" fill="#000" textLength="198.70" stroke="#000" stroke-width="0.14" >3. 编写程序，输入一个自然数，输出他的二进制数，八进制数，十六进制数。</text>
<path transform="translate(599.10,261.76) scale(0.738)" d="M3.4 0.3 V2.3 H0.6 M1.6 1.3 L0.6 2.3 L1.6 3.3" stroke="#7a7a7a" stroke-width="0.62" fill="none"/>
<text x="400.40" y="400" font-size="5.6" fill="#000" textLength="220.30" stroke="#000" stroke-width="0.14" >4. 编写程序，输入一个包含若干整数的列表，输出一个新列表，新列表中只包含原列表中</text>
<text x="400.40" y="407" font-size="5.6" fill="#000" stroke="#000" stroke-width="0.14" >的偶数。</text>
<path transform="translate(423.00,403.86) scale(0.738)" d="M3.4 0.3 V2.3 H0.6 M1.6 1.3 L0.6 2.3 L1.6 3.3" stroke="#7a7a7a" stroke-width="0.62" fill="none"/>
<text x="723.40" y="259" font-size="5.6" fill="#000" textLength="219.80" stroke="#000" stroke-width="0.14" >5. 编写程序，输入一个包含若干整数的列表，输出一个新列表，新列表中所有元素都来自</text>
<text x="723.40" y="266" font-size="5.6" fill="#000" stroke="#000" stroke-width="0.14" >远列表，且降序排列。</text>
<path transform="translate(779.60,262.56) scale(0.738)" d="M3.4 0.3 V2.3 H0.6 M1.6 1.3 L0.6 2.3 L1.6 3.3" stroke="#7a7a7a" stroke-width="0.62" fill="none"/>
<text x="723.20" y="402" font-size="7.45" fill="#000" font-weight="700" class="f-r" >实验心得：</text>
<path transform="translate(760.65,397.51) scale(0.982)" d="M3.4 0.3 V2.3 H0.6 M1.6 1.3 L0.6 2.3 L1.6 3.3" stroke="#7a7a7a" stroke-width="0.62" fill="none"/>
<text x="723.20" y="409" font-size="5.6" fill="#000" textLength="221.20" stroke="#000" stroke-width="0.14" >对 python 的数据类型深入了解，能够初步使用常见的内置函数，加深了对运算符使用方法</text>
<text x="723.20" y="417" font-size="5.6" fill="#000" stroke="#000" stroke-width="0.14" >的掌握。</text>
<path transform="translate(745.80,413.36) scale(0.738)" d="M3.4 0.3 V2.3 H0.6 M1.6 1.3 L0.6 2.3 L1.6 3.3" stroke="#7a7a7a" stroke-width="0.62" fill="none"/>
<text x="723.20" y="426" font-size="7.45" fill="#000" font-weight="700" class="f-r" >教师评分：</text>
<path transform="translate(760.65,422.01) scale(0.982)" d="M3.4 0.3 V2.3 H0.6 M1.6 1.3 L0.6 2.3 L1.6 3.3" stroke="#7a7a7a" stroke-width="0.62" fill="none"/>
<text x="723.20" y="432" font-size="5.6" fill="#000" stroke="#000" stroke-width="0.14" ></text>
<path transform="translate(723.40,429.36) scale(0.738)" d="M3.4 0.3 V2.3 H0.6 M1.6 1.3 L0.6 2.3 L1.6 3.3" stroke="#7a7a7a" stroke-width="0.62" fill="none"/>
<text x="723.20" y="439" font-size="5.6" fill="#000" stroke="#000" stroke-width="0.14" ></text>
<path transform="translate(723.40,436.36) scale(0.738)" d="M3.4 0.3 V2.3 H0.6 M1.6 1.3 L0.6 2.3 L1.6 3.3" stroke="#7a7a7a" stroke-width="0.62" fill="none"/>
<text x="723.40" y="447" font-size="5.6" fill="#000" stroke="#000" stroke-width="0.14" ></text>
<path transform="translate(723.60,444.16) scale(0.738)" d="M3.4 0.3 V2.3 H0.6 M1.6 1.3 L0.6 2.3 L1.6 3.3" stroke="#7a7a7a" stroke-width="0.62" fill="none"/>
</svg>
</div></body></html>
